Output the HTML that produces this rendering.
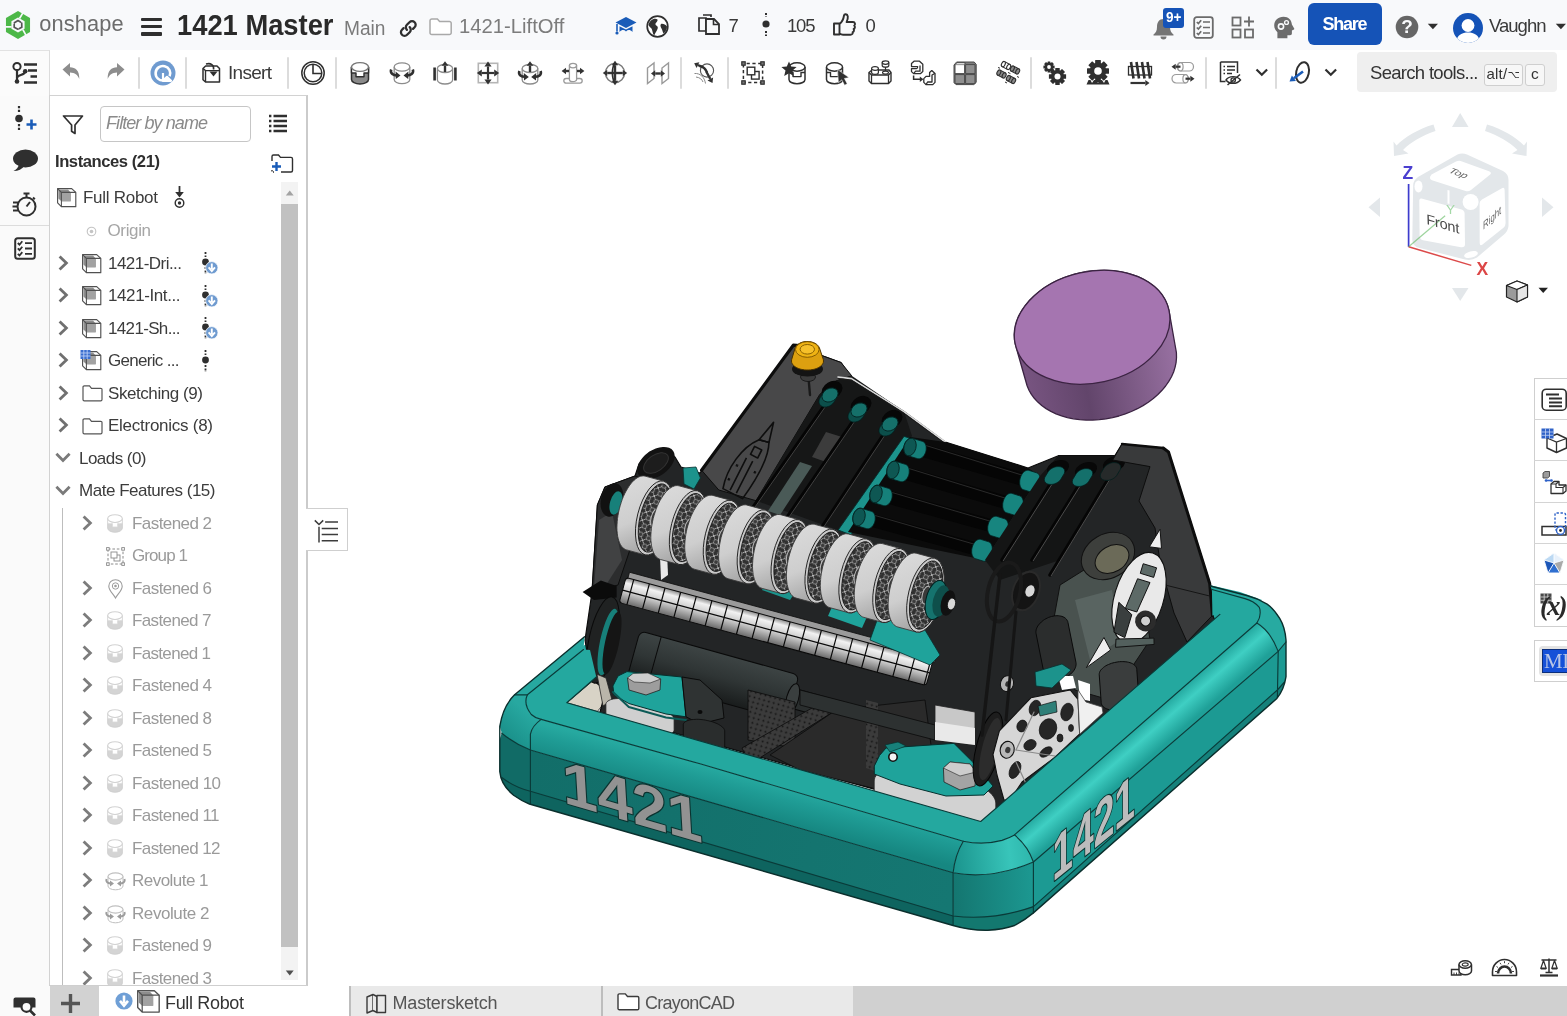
<!DOCTYPE html>
<html lang="en"><head><meta charset="utf-8"><title>1421 Master | Full Robot</title>
<style>
html,body{margin:0;padding:0;}
body{width:1567px;height:1016px;overflow:hidden;background:#fff;position:relative;
font-family:"Liberation Sans",sans-serif;}
.t{position:absolute;white-space:nowrap;}
.b{position:absolute;box-sizing:border-box;}
.i{position:absolute;overflow:visible;}
#app{position:absolute;left:0;top:0;width:1567px;height:1016px;overflow:hidden;will-change:transform;}
</style></head><body><div id="app">
<div class="b" style="left:0.00px;top:0.00px;width:1567.00px;height:50.00px;background:#f8f9fb;"></div>
<div class="b" style="left:0.00px;top:50.00px;width:50.00px;height:966.00px;background:#fafafa;"></div>
<div class="b" style="left:0.00px;top:50.00px;width:50.00px;height:45.50px;background:#fbfbfb;border-right:1px solid #dcdcdc;border-top:1px solid #e2e2e2;"></div>
<div class="b" style="left:0.00px;top:225.00px;width:50.00px;height:1.00px;background:#dcdcdc;"></div>
<div class="b" style="left:49.00px;top:95.00px;width:259.00px;height:891.00px;background:#fff;border:1px solid #d2d2d2;border-right:2px solid #cbcbcb;border-bottom:1px solid #cfcfcf;"></div>
<div class="b" style="left:0.00px;top:986.00px;width:1567.00px;height:30.00px;background:#d0d0d0;"></div>
<div class="b" style="left:0.00px;top:986.00px;width:50.00px;height:30.00px;background:#fafafa;"></div>
<div class="b" style="left:50.00px;top:986.00px;width:49.00px;height:30.00px;background:#d2d2d2;"></div>
<div class="b" style="left:99.00px;top:986.00px;width:250.00px;height:30.00px;background:#fff;"></div>
<div class="b" style="left:349.00px;top:986.00px;width:2.00px;height:30.00px;background:#bdbdbd;"></div>
<div class="b" style="left:351.00px;top:986.00px;width:250.00px;height:30.00px;background:#e9e9e9;"></div>
<div class="b" style="left:601.00px;top:986.00px;width:2.00px;height:30.00px;background:#bdbdbd;"></div>
<div class="b" style="left:603.00px;top:986.00px;width:250.00px;height:30.00px;background:#e9e9e9;"></div>
<svg class="i" style="left:2.90px;top:10.40px;" width="30" height="30" viewBox="0 0 30 30"><g transform="translate(15,15)"><polygon points="0.00,-13.90 12.04,-6.95 12.04,6.95 0.00,13.90 -12.04,6.95 -12.04,-6.95" fill="#4db848"/><polygon points="0.00,-7.60 6.58,-3.80 6.58,3.80 0.00,7.60 -6.58,3.80 -6.58,-3.80" fill="#f8f9fb"/>
<path d="M1.50 -6.50 L5.20 -12.60 M4.88 4.55 L8.31 10.80 M-6.38 1.95 L-13.51 1.80" stroke="#f8f9fb" stroke-width="1.7" fill="none"/>
<path d="M-3.60 -2.20 L0.00 -4.40 M0.00 -4.40 L2.40 -3.00 M3.71 -2.02 L3.81 2.20 M3.81 2.20 L1.40 3.58 M-0.11 4.22 L-3.81 2.20 M-3.81 2.20 L-3.80 -0.58" stroke="#555" stroke-width="1.7" fill="none" stroke-linecap="round" stroke-linejoin="round"/></g></svg>
<div class="t" style="left:39.20px;top:10.62px;font-size:21.80px;line-height:26.16px;color:#6c6c6c;letter-spacing:0.142px;">onshape</div>
<div class="b" style="left:141.00px;top:17.50px;width:21.00px;height:3.60px;background:#2f2f2f;border-radius:1px;"></div>
<div class="b" style="left:141.00px;top:24.80px;width:21.00px;height:3.60px;background:#2f2f2f;border-radius:1px;"></div>
<div class="b" style="left:141.00px;top:32.10px;width:21.00px;height:3.60px;background:#2f2f2f;border-radius:1px;"></div>
<div class="t" style="left:176.80px;top:7.70px;font-size:29.00px;line-height:34.80px;color:#2a2a2a;transform:scaleX(0.9424);transform-origin:0 50%;font-weight:700;">1421 Master</div>
<div class="t" style="left:344.30px;top:16.20px;font-size:20.00px;line-height:24.00px;color:#7a7a7a;transform:scaleX(0.9573);transform-origin:0 50%;">Main</div>
<svg class="i" style="left:398.00px;top:17.00px;" width="20" height="20" viewBox="0 0 20 20"><g fill="none" stroke="#2f2f2f" stroke-width="2.3" stroke-linecap="round">
<path d="M8.6 11.4 a3.6 3.6 0 0 1 0 -5.1 l2.6 -2.6 a3.6 3.6 0 0 1 5.1 5.1 l-1.6 1.6" transform="translate(0.3,1.5)"/>
<path d="M11.4 8.6 a3.6 3.6 0 0 1 0 5.1 l-2.6 2.6 a3.6 3.6 0 0 1 -5.1 -5.1 l1.6 -1.6" transform="translate(0.3,1.5)"/></g></svg>
<svg class="i" style="left:429.00px;top:17.60px;" width="24" height="19" viewBox="0 0 24 19"><path d="M1 2.8 a1.8 1.8 0 0 1 1.8 -1.8 h5.6 l2.2 2.4 h9.8 a1.8 1.8 0 0 1 1.8 1.8 v9.6 a1.8 1.8 0 0 1 -1.8 1.8 h-17.6 a1.8 1.8 0 0 1 -1.8 -1.8 z" fill="#fff" stroke="#a9a9a9" stroke-width="1.5"/></svg>
<div class="t" style="left:458.70px;top:13.88px;font-size:20.20px;line-height:24.24px;color:#7c7c7c;transform:scaleX(1.0030);transform-origin:0 50%;">1421-LiftOff</div>
<svg class="i" style="left:615.00px;top:15.50px;" width="22" height="20" viewBox="0 0 22 20"><path d="M11 1 L21.5 6.5 L11 12 L0.5 6.5 Z" fill="#1a5cb8"/>
<path d="M4.5 10.2 V16 C7 13.5 9 13.5 11 15.5 C13 13.5 15 13.5 17.5 16 V10.2 L11 13.6 Z" fill="#1a5cb8"/>
<path d="M2 8 V15.5" stroke="#1a5cb8" stroke-width="1.6"/><circle cx="2" cy="17" r="1.6" fill="#1a5cb8"/></svg>
<svg class="i" style="left:646.00px;top:15.00px;" width="23" height="23" viewBox="0 0 23 23"><circle cx="11.5" cy="11.5" r="10.3" fill="#fff" stroke="#2f2f2f" stroke-width="1.7"/>
<path d="M5 5.5 C7 3.5 10 3 11.5 4.5 C12 6 10.5 7 9.5 8.5 C9 10 10.5 10.5 11.5 11.5 C12.5 13 11 15 10 17 C9 18.5 8.5 20 8 20.5 C6.5 18 6.5 15.5 5.5 13.5 C4 12 2.5 11 2.5 9.5 C3 7.5 4 6.5 5 5.5 Z" fill="#2f2f2f"/>
<path d="M15 9 C17 8.5 19.5 9.5 21 11.5 C21 14.5 19.5 17 17.5 18.5 C16.5 17 16.5 15 15.5 13.5 C14.5 12 14 10 15 9 Z" fill="#2f2f2f"/></svg>
<svg class="i" style="left:698.00px;top:14.00px;" width="22" height="21" viewBox="0 0 22 21"><path d="M1 4 H8 V17 H1 Z" fill="#f8f9fb" stroke="#2f2f2f" stroke-width="1.7"/>
<path d="M5 1 H13 V3" fill="none" stroke="#2f2f2f" stroke-width="1.7"/>
<path d="M8 5 H16 L21 10 V20 H8 Z" fill="#f8f9fb" stroke="#2f2f2f" stroke-width="1.8"/>
<path d="M15.5 5 V10.5 H21" fill="none" stroke="#2f2f2f" stroke-width="1.6"/></svg>
<div class="t" style="left:728.50px;top:15.40px;font-size:18.50px;line-height:22.20px;color:#3a3a3a;letter-spacing:0.000px;">7</div>
<svg class="i" style="left:760.00px;top:12.00px;" width="12" height="25" viewBox="0 0 12 25"><path d="M6 1 V5 M6 19 V24" stroke="#2f2f2f" stroke-width="2" stroke-dasharray="2 1.4"/><circle cx="6" cy="12" r="3.6" fill="#2f2f2f"/></svg>
<div class="t" style="left:787.00px;top:15.40px;font-size:18.50px;line-height:22.20px;color:#3a3a3a;letter-spacing:-1.184px;">105</div>
<svg class="i" style="left:832.00px;top:12.00px;" width="25" height="25" viewBox="0 0 25 25"><path d="M2 11.5 H7.5 V22.5 H2 Z M7.5 12 C10 10 11.5 7 12 3.5 C12.3 1.8 15.3 1.6 15.8 4.4 C16.1 6.3 15.3 8.3 14.6 10 H21 C23.2 10 23.6 12.8 22.2 13.6 C23.4 14.6 23 16.6 21.6 17 C22.4 18.2 21.9 19.8 20.6 20.2 C21 21.6 20.2 22.8 18.4 22.8 H11 C9.5 22.8 8.5 22.2 7.5 21.5" fill="#f8f9fb" stroke="#2f2f2f" stroke-width="1.9" stroke-linejoin="round"/></svg>
<div class="t" style="left:865.50px;top:15.40px;font-size:18.50px;line-height:22.20px;color:#3a3a3a;letter-spacing:0.000px;">0</div>
<svg class="i" style="left:1152.00px;top:18.00px;" width="23" height="22" viewBox="0 0 23 22"><path d="M11.5 1 C7 1 5 4.5 5 9 C5 13 3.5 15 1.5 16.5 V17.5 H21.5 V16.5 C19.5 15 18 13 18 9 C18 4.5 16 1 11.5 1 Z" fill="#747474"/><path d="M8.5 18.5 a3 3 0 0 0 6 0 Z" fill="#747474"/></svg>
<div class="b" style="left:1163.00px;top:8.00px;width:20.50px;height:19.50px;background:#1553b7;border-radius:3px;"></div>
<div class="t" style="left:1165.60px;top:9.20px;font-size:14.00px;line-height:16.80px;color:#fff;transform:scaleX(0.9710);transform-origin:0 50%;font-weight:700;">9+</div>
<svg class="i" style="left:1193.00px;top:16.00px;" width="21" height="23" viewBox="0 0 21 23"><rect x="1.2" y="1.2" width="18.6" height="20.6" rx="2.5" fill="#f8f9fb" stroke="#6b6b6b" stroke-width="1.8"/>
<g stroke="#6b6b6b" stroke-width="1.7" fill="none"><path d="M10 6 H17 M10 11.5 H17 M10 17 H17"/><path d="M3.8 6 l1.6 1.6 l2.8 -3.4 M3.8 11.5 l1.6 1.6 l2.8 -3.4 M3.8 17 l1.6 1.6 l2.8 -3.4"/></g></svg>
<svg class="i" style="left:1231.00px;top:16.00px;" width="25" height="23" viewBox="0 0 25 23"><g fill="none" stroke="#6b6b6b" stroke-width="1.8"><rect x="1.5" y="1.5" width="8" height="8"/><rect x="1.5" y="13.5" width="8" height="8"/><rect x="14" y="13.5" width="8" height="8"/><path d="M18 0.5 V10.5 M13 5.5 H23"/></g></svg>
<svg class="i" style="left:1273.00px;top:16.00px;" width="22" height="23" viewBox="0 0 22 23"><path d="M10.5 0.8 C5 0.8 1.2 4.6 1.2 9.6 C1.2 12.6 2.6 14.6 4.4 16.2 V22.2 H14.4 V19.2 H17 C18.3 19.2 18.9 18.4 18.9 17.2 V14.4 L21 13.6 C21.4 13.4 21.4 12.9 21.2 12.5 L18.9 8.6 C18.6 4 15.5 0.8 10.5 0.8 Z" fill="#6c6c6c"/>
<circle cx="8" cy="10.5" r="2.6" fill="none" stroke="#f8f9fb" stroke-width="1.6"/><circle cx="13.5" cy="6.5" r="1.9" fill="none" stroke="#f8f9fb" stroke-width="1.4"/></svg>
<div class="b" style="left:1308.00px;top:3.00px;width:74.00px;height:41.50px;background:#1553b7;border-radius:6px;"></div>
<div class="t" style="left:1322.50px;top:13.50px;font-size:18.00px;line-height:21.60px;color:#fff;letter-spacing:-1.257px;font-weight:700;">Share</div>
<svg class="i" style="left:1394.50px;top:15.00px;" width="24" height="24" viewBox="0 0 24 24"><circle cx="12" cy="12" r="11.3" fill="#666"/></svg>
<div class="t" style="left:1401.20px;top:15.90px;font-size:19.00px;line-height:22.80px;color:#f8f9fb;font-weight:700;">?</div>
<svg class="i" style="left:1427.00px;top:23.00px;" width="12" height="7" viewBox="0 0 12 7"><path d="M0.8 0.8 H11 L5.9 6.2 Z" fill="#2f2f2f"/></svg>
<svg class="i" style="left:1453.00px;top:12.50px;" width="30" height="28" viewBox="0 0 30 28"><defs><clipPath id="avc"><circle cx="15" cy="15" r="15"/></clipPath></defs>
<g clip-path="url(#avc)"><rect width="30" height="30" fill="#1553b7"/><circle cx="15" cy="12.5" r="6.4" fill="#fff"/><path d="M3 31 C3 22 9 19.5 15 19.5 C21 19.5 27 22 27 31 Z" fill="#fff"/></g></svg>
<div class="t" style="left:1489.00px;top:15.10px;font-size:18.50px;line-height:22.20px;color:#3a3a3a;letter-spacing:-0.983px;">Vaughn</div>
<svg class="i" style="left:1555.00px;top:23.00px;" width="12" height="7" viewBox="0 0 12 7"><path d="M0.8 0.8 H11 L5.9 6.2 Z" fill="#2f2f2f"/></svg>
<svg class="i" style="left:11.00px;top:61.00px;" width="28" height="24" viewBox="0 0 28 24"><g stroke="#2f2f2f" fill="none" stroke-width="2.6"><path d="M13 3.5 H26 M17 9.5 H26 M19.5 15.5 H26 M13 21.5 H26"/></g>
<circle cx="6" cy="5.5" r="3.6" fill="#fff" stroke="#2f2f2f" stroke-width="2"/>
<path d="M6 9 V20" stroke="#2f2f2f" stroke-width="2.2"/><path d="M6 17 C6 13 14 15 14 10.5" stroke="#2f2f2f" stroke-width="2.2" fill="none"/>
<circle cx="6" cy="20.5" r="2.3" fill="#2f2f2f"/><circle cx="14.2" cy="10.2" r="2.3" fill="#2f2f2f"/></svg>
<svg class="i" style="left:58.00px;top:59.00px;" width="26" height="26" viewBox="0 0 26 26"><path d="M4.5 10.5 L12 4 V8.3 C17.5 8.3 21.5 11.5 21.3 20 C19.6 15.5 17 13.6 12 13.4 V17.6 Z" fill="#8d8d8d"/></svg>
<svg class="i" style="left:103.00px;top:59.00px;" width="26" height="26" viewBox="0 0 26 26"><path d="M21.5 10.5 L14 4 V8.3 C8.5 8.3 4.5 11.5 4.7 20 C6.4 15.5 9 13.6 14 13.4 V17.6 Z" fill="#8d8d8d"/></svg>
<div class="b" style="left:137.80px;top:56.50px;width:2.40px;height:32.00px;background:#dcdcdc;border-radius:1px;"></div>
<svg class="i" style="left:149.50px;top:59.50px;" width="26" height="26" viewBox="0 0 26 26"><circle cx="13" cy="13" r="12.5" fill="#6f9bd0"/>
<path d="M13.8 20.5 A7.3 7.3 0 1 1 19.6 16.2" fill="none" stroke="#fff" stroke-width="2.6"/>
<path d="M13.2 12 V18.5 H10.5 L14.8 23.5 L21.5 20 L17.5 18.6 V12 Z" fill="#fff" opacity="0.0"/>
<path d="M13 13 V20.8 M13 20.8 H21 L17 16.8 Z" stroke="#fff" stroke-width="2.2" fill="#fff" stroke-linejoin="round"/></svg>
<div class="b" style="left:185.10px;top:56.50px;width:2.40px;height:32.00px;background:#dcdcdc;border-radius:1px;"></div>
<svg class="i" style="left:197.50px;top:59.50px;" width="26" height="26" viewBox="0 0 26 26"><path d="M5 8.5 L7.6 6 H19 L21.5 8.5 V22 H7.5 L5 19.8 Z" fill="#fff" stroke="#2f2f2f" stroke-width="1.5" stroke-linejoin="round"/>
<path d="M5 8.5 L7.5 10.6 H21.5 M7.5 10.6 V22" fill="none" stroke="#2f2f2f" stroke-width="1.4"/>
<path d="M8 4 C13 2.6 16 5 15.6 9.5" fill="none" stroke="#2f2f2f" stroke-width="1.6"/>
<path d="M11.5 11.5 H19.5 L15.5 16.5 Z" fill="#2f2f2f"/></svg>
<div class="t" style="left:228.00px;top:61.60px;font-size:19.00px;line-height:22.80px;color:#3a3a3a;letter-spacing:-0.704px;">Insert</div>
<div class="b" style="left:286.80px;top:56.50px;width:2.40px;height:32.00px;background:#dcdcdc;border-radius:1px;"></div>
<svg class="i" style="left:299.50px;top:59.50px;" width="26" height="26" viewBox="0 0 26 26"><circle cx="13" cy="13" r="11.2" fill="#fff" stroke="#2f2f2f" stroke-width="1.5"/><circle cx="13" cy="13" r="8.8" fill="#fff" stroke="#2f2f2f" stroke-width="1.5"/><path d="M13 4.5 V13.5 H21.5" fill="none" stroke="#2f2f2f" stroke-width="1.6"/></svg>
<div class="b" style="left:334.50px;top:56.50px;width:2.40px;height:32.00px;background:#dcdcdc;border-radius:1px;"></div>
<svg class="i" style="left:346.50px;top:59.50px;" width="26" height="26" viewBox="0 0 26 26"><path d="M4.5 7 V19.5 A8.5 4.4 0 0 0 21.5 19.5 V7" fill="#8a8a8a" stroke="#2f2f2f" stroke-width="1.5"/>
<path d="M4.5 7 V13 H9 V16.8 H17 V13 H21.5 V7 Z" fill="#fff" stroke="#2f2f2f" stroke-width="1.4" stroke-linejoin="round"/>
<ellipse cx="13" cy="7" rx="8.5" ry="4.4" fill="#fff" stroke="#777" stroke-width="1.4"/></svg>
<svg class="i" style="left:389.00px;top:59.50px;" width="26" height="26" viewBox="0 0 26 26"><path d="M5.20 7.00 V19.50 A7.80 4.20 0 0 0 20.80 19.50 V7.00" fill="#fff" stroke="#8c8c8c" stroke-width="1.30"/><ellipse cx="13.00" cy="7.00" rx="7.80" ry="4.20" fill="#fff" stroke="#8c8c8c" stroke-width="1.30"/><path d="M2.2 9.5 C0.8 13.5 4.5 15.8 8.5 15.5" fill="none" stroke="#2f2f2f" stroke-width="2.6"/><path d="M11.5 15.6 L6.6 11.6 L6.8 19 Z" fill="#2f2f2f"/>
<path d="M23.8 9.5 C25.2 13.5 21.5 15.8 17.5 15.5" fill="none" stroke="#2f2f2f" stroke-width="2.6"/><path d="M14.5 15.6 L19.4 11.6 L19.2 19 Z" fill="#2f2f2f"/></svg>
<svg class="i" style="left:431.50px;top:59.50px;" width="26" height="26" viewBox="0 0 26 26"><path d="M5.40 8.50 V20.00 A7.60 4.00 0 0 0 20.60 20.00 V8.50" fill="#fff" stroke="#8c8c8c" stroke-width="1.30"/><ellipse cx="13.00" cy="8.50" rx="7.60" ry="4.00" fill="#fff" stroke="#8c8c8c" stroke-width="1.30"/><path d="M13.00 12.00 L13.00 5.80" stroke="#333" stroke-width="2.40" fill="none"/><path d="M13.00 1.20 L16.40 5.80 L9.60 5.80 Z" fill="#333"/><path d="M2.6 7.5 V20.5 M23.4 7.5 V20.5" stroke="#2f2f2f" stroke-width="2.6"/></svg>
<svg class="i" style="left:474.50px;top:59.50px;" width="26" height="26" viewBox="0 0 26 26"><rect x="3.3" y="3.3" width="19.4" height="19.4" fill="#fff" stroke="#b5b5b5" stroke-width="1.6"/><path d="M13.00 13.00 L13.00 6.50" stroke="#333" stroke-width="2.20" fill="none"/><path d="M13.00 1.50 L16.60 6.50 L9.40 6.50 Z" fill="#333"/><path d="M13.00 13.00 L13.00 19.50" stroke="#333" stroke-width="2.20" fill="none"/><path d="M13.00 24.50 L9.40 19.50 L16.60 19.50 Z" fill="#333"/><path d="M13.00 13.00 L6.80 13.00" stroke="#333" stroke-width="2.20" fill="none"/><path d="M1.80 13.00 L6.80 9.40 L6.80 16.60 Z" fill="#333"/><path d="M13.00 13.00 L19.20 13.00" stroke="#333" stroke-width="2.20" fill="none"/><path d="M24.20 13.00 L19.20 16.60 L19.20 9.40 Z" fill="#333"/></svg>
<svg class="i" style="left:516.50px;top:59.50px;" width="26" height="26" viewBox="0 0 26 26"><path d="M5.20 8.50 V20.00 A7.80 4.00 0 0 0 20.80 20.00 V8.50" fill="#fff" stroke="#8c8c8c" stroke-width="1.30"/><ellipse cx="13.00" cy="8.50" rx="7.80" ry="4.00" fill="#fff" stroke="#8c8c8c" stroke-width="1.30"/><path d="M13.00 12.00 L13.00 5.80" stroke="#333" stroke-width="2.40" fill="none"/><path d="M13.00 1.20 L16.40 5.80 L9.60 5.80 Z" fill="#333"/><path d="M2.4 11 C1 14.8 4.5 17 8.5 16.8" fill="none" stroke="#2f2f2f" stroke-width="2.6"/><path d="M11.8 17 L6.8 13 L7 20.4 Z" fill="#2f2f2f"/>
<path d="M23.6 11 C25 14.8 21.5 17 17.5 16.8" fill="none" stroke="#2f2f2f" stroke-width="2.6"/><path d="M14.2 17 L19.2 13 L19 20.4 Z" fill="#2f2f2f"/></svg>
<svg class="i" style="left:559.50px;top:59.50px;" width="26" height="26" viewBox="0 0 26 26"><rect x="3.8" y="18.5" width="18.4" height="4.6" rx="2.3" fill="#fff" stroke="#9a9a9a" stroke-width="1.3"/><path d="M9.40 5.60 V19.50 A3.60 2.20 0 0 0 16.60 19.50 V5.60" fill="#fff" stroke="#9a9a9a" stroke-width="1.30"/><ellipse cx="13.00" cy="5.60" rx="3.60" ry="2.20" fill="#fff" stroke="#9a9a9a" stroke-width="1.30"/><path d="M9.00 11.00 L6.00 11.00" stroke="#333" stroke-width="2.40" fill="none"/><path d="M1.60 11.00 L6.00 7.70 L6.00 14.30 Z" fill="#333"/><path d="M17.00 11.00 L20.00 11.00" stroke="#333" stroke-width="2.40" fill="none"/><path d="M24.40 11.00 L20.00 14.30 L20.00 7.70 Z" fill="#333"/></svg>
<svg class="i" style="left:601.50px;top:59.50px;" width="26" height="26" viewBox="0 0 26 26"><circle cx="13" cy="13" r="9.6" fill="#fff" stroke="#777" stroke-width="1.4"/><path d="M13.00 13.00 L13.00 5.20" stroke="#333" stroke-width="2.40" fill="none"/><path d="M13.00 0.80 L16.30 5.20 L9.70 5.20 Z" fill="#333"/><path d="M13.00 13.00 L13.00 20.80" stroke="#333" stroke-width="2.40" fill="none"/><path d="M13.00 25.20 L9.70 20.80 L16.30 20.80 Z" fill="#333"/><path d="M13.00 13.00 L5.20 13.00" stroke="#333" stroke-width="2.40" fill="none"/><path d="M0.80 13.00 L5.20 9.70 L5.20 16.30 Z" fill="#333"/><path d="M13.00 13.00 L20.80 13.00" stroke="#333" stroke-width="2.40" fill="none"/><path d="M25.20 13.00 L20.80 16.30 L20.80 9.70 Z" fill="#333"/><path d="M13 3 C9.5 8 9.5 18 13 23" fill="none" stroke="#2f2f2f" stroke-width="1.6"/></svg>
<svg class="i" style="left:644.50px;top:59.50px;" width="26" height="26" viewBox="0 0 26 26"><path d="M2.5 8 L9 3 V18.5 L2.5 23.5 Z M17 8 L23.5 3 V18.5 L17 23.5 Z" fill="#fff" stroke="#9a9a9a" stroke-width="1.4"/><path d="M13.00 13.50 L10.20 13.50" stroke="#333" stroke-width="2.40" fill="none"/><path d="M6.00 13.50 L10.20 10.30 L10.20 16.70 Z" fill="#333"/><path d="M13.00 13.50 L15.80 13.50" stroke="#333" stroke-width="2.40" fill="none"/><path d="M20.00 13.50 L15.80 16.70 L15.80 10.30 Z" fill="#333"/></svg>
<div class="b" style="left:679.50px;top:56.50px;width:2.40px;height:32.00px;background:#dcdcdc;border-radius:1px;"></div>
<svg class="i" style="left:691.50px;top:59.50px;" width="26" height="26" viewBox="0 0 26 26"><circle cx="15" cy="10.5" r="6.6" fill="none" stroke="#555" stroke-width="1.1"/><path d="M2.5 13.5 C8 13 12.5 17 13.5 23.5 M4 17 C8 17.5 10 19.5 11 22" fill="none" stroke="#888" stroke-width="1"/><path d="M9.00 6.50 L5.98 5.03" stroke="#333" stroke-width="2.40" fill="none"/><path d="M2.20 3.20 L7.38 2.15 L4.58 7.91 Z" fill="#333"/><path d="M14.50 12.00 L18.30 18.96" stroke="#333" stroke-width="2.40" fill="none"/><path d="M20.50 23.00 L15.49 20.49 L21.11 17.43 Z" fill="#333"/><path d="M8 6 C11.5 7 14 9.5 15 12.5" stroke="#2f2f2f" stroke-width="2.4" fill="none"/></svg>
<div class="b" style="left:726.80px;top:56.50px;width:2.40px;height:32.00px;background:#dcdcdc;border-radius:1px;"></div>
<svg class="i" style="left:739.50px;top:59.50px;" width="26" height="26" viewBox="0 0 26 26"><rect x="3.4" y="3.4" width="19.2" height="19.2" fill="none" stroke="#2f2f2f" stroke-width="1.5" stroke-dasharray="3.2 2.6" stroke-dashoffset="-3.2"/>
<g fill="#777" stroke="#2f2f2f" stroke-width="1.2"><rect x="1.8" y="1.8" width="3.4" height="3.4"/><rect x="20.8" y="1.8" width="3.4" height="3.4"/><rect x="1.8" y="20.8" width="3.4" height="3.4"/><rect x="20.8" y="20.8" width="3.4" height="3.4"/></g>
<rect x="11.5" y="11.5" width="7.6" height="7.6" fill="#fff" stroke="#2f2f2f" stroke-width="1.4"/><rect x="7.2" y="7.2" width="7.6" height="7.6" fill="#fff" stroke="#2f2f2f" stroke-width="1.4"/></svg>
<svg class="i" style="left:782.00px;top:59.50px;" width="26" height="26" viewBox="0 0 26 26"><path d="M7 7 V19.5 A8 4.2 0 0 0 23 19.5 V7" fill="#fff" stroke="#2f2f2f" stroke-width="1.5"/>
<path d="M7 12.5 H11 V16.6 H19 V12.5 H23" fill="none" stroke="#2f2f2f" stroke-width="1.4" stroke-linejoin="round"/>
<ellipse cx="15" cy="7" rx="8" ry="4.2" fill="#fff" stroke="#2f2f2f" stroke-width="1.4"/><path d="M7 1.5 L9.2 6.6 L14.6 7 L10.5 10.6 L11.8 16 L7 13.2 L2.2 16 L3.5 10.6 L-0.6 7 L4.8 6.6 Z" fill="#2f2f2f"/></svg>
<svg class="i" style="left:824.00px;top:59.50px;" width="26" height="26" viewBox="0 0 26 26"><path d="M2.5 7 V19.5 A8 4.2 0 0 0 18.5 19.5 V7" fill="#fff" stroke="#2f2f2f" stroke-width="1.5"/>
<path d="M2.5 12.5 H6.5 V16.6 H14.5 V12.5 H18.5" fill="none" stroke="#2f2f2f" stroke-width="1.4" stroke-linejoin="round"/>
<ellipse cx="10.5" cy="7" rx="8" ry="4.2" fill="#fff" stroke="#2f2f2f" stroke-width="1.4"/><path d="M13.6 9.5 L25 17.6 L20.4 18.4 L23.2 23.8 L20.6 25.2 L17.8 19.8 L14.4 22.8 Z" fill="#2f2f2f" stroke="#fff" stroke-width="0.5"/></svg>
<svg class="i" style="left:866.50px;top:59.50px;" width="26" height="26" viewBox="0 0 26 26"><path d="M2 12.5 L5 10 H22 L24 12.5 V21 L21.5 23.5 H4.5 L2 21 Z" fill="#fff" stroke="#2f2f2f" stroke-width="1.4" stroke-linejoin="round"/><path d="M2 12.5 L4.5 15 H21.5 L24 12.5 M4.5 15 V23.5 M21.5 15 V23.5" fill="none" stroke="#2f2f2f" stroke-width="1.3"/><path d="M4.60 8.50 V12.40 A3.40 1.90 0 0 0 11.40 12.40 V8.50" fill="#fff" stroke="#2f2f2f" stroke-width="1.20"/><ellipse cx="8.00" cy="8.50" rx="3.40" ry="1.90" fill="#fff" stroke="#2f2f2f" stroke-width="1.20"/><path d="M18.5 5 V12" stroke="#2f2f2f" stroke-width="1.2"/><ellipse cx="18.5" cy="12.6" rx="3" ry="1.5" fill="#fff" stroke="#2f2f2f" stroke-width="1.1"/><path d="M15.20 2.60 V5.40 A3.30 1.70 0 0 0 21.80 5.40 V2.60" fill="#fff" stroke="#2f2f2f" stroke-width="1.20"/><ellipse cx="18.50" cy="2.60" rx="3.30" ry="1.70" fill="#fff" stroke="#2f2f2f" stroke-width="1.20"/></svg>
<svg class="i" style="left:909.50px;top:59.50px;" width="26" height="26" viewBox="0 0 26 26"><g fill="#fff" stroke="#2f2f2f" stroke-width="1.3" stroke-linejoin="round"><path d="M1.5 3.5 L4 1.2 H9.5 L12.8 4.2 V11.6 L10.6 13.6 H3.6 L1.5 11.6 V8.6 H7.6 V6.6 H1.5 Z"/><path d="M3.6 13.6 L5.6 11.2 H10 V5.6"/>
<path d="M13.8 18.6 L16 16.4 H19.6 V12.6 L21.8 10.6 L25 13.4 V22.4 L22.8 24.6 H16 L13.8 22.4 Z"/><path d="M16 24.6 L17.6 22 H22 V15 L25 13.4"/></g>
<path d="M3.6 15.5 V19.2 H10.6" fill="none" stroke="#2f2f2f" stroke-width="1.5"/><path d="M13.4 19.2 L9.8 16.4 V22 Z" fill="#2f2f2f"/></svg>
<svg class="i" style="left:951.50px;top:59.50px;" width="26" height="26" viewBox="0 0 26 26"><g stroke="#4a4a4a" stroke-width="1" stroke-linejoin="round"><path d="M2 5 L4.6 2 H22.2 L24.2 4.4 V22.4 L21.8 24.6 H4 L2 22.6 Z" fill="#7d7d7d"/>
<rect x="3" y="4.6" width="9.6" height="9" fill="#fff"/><rect x="13.6" y="4.6" width="9.4" height="9" fill="#8f8f8f"/><rect x="3" y="14.6" width="9.6" height="9" fill="#8f8f8f"/><rect x="13.6" y="14.6" width="9.4" height="9" fill="#8f8f8f"/><path d="M3 4.6 L5 2.6 H13.4 L12.6 4.6" fill="#e6e6e6"/></g></svg>
<svg class="i" style="left:994.50px;top:59.50px;" width="26" height="26" viewBox="0 0 26 26"><g transform="rotate(28 11 5.5)"><rect x="8" y="2.7" width="6" height="5.6" fill="#fff" stroke="#2f2f2f" stroke-width="1.1"/><ellipse cx="8" cy="5.5" rx="1.7" ry="2.8" fill="#fff" stroke="#2f2f2f" stroke-width="1.1"/><ellipse cx="14" cy="5.5" rx="1.7" ry="2.8" fill="#fff" stroke="#2f2f2f" stroke-width="1.1"/></g><g transform="rotate(28 20 10)"><rect x="17" y="7.2" width="6" height="5.6" fill="#8a8a8a" stroke="#2f2f2f" stroke-width="1.1"/><ellipse cx="17" cy="10" rx="1.7" ry="2.8" fill="#8a8a8a" stroke="#2f2f2f" stroke-width="1.1"/><ellipse cx="23" cy="10" rx="1.7" ry="2.8" fill="#8a8a8a" stroke="#2f2f2f" stroke-width="1.1"/></g><g transform="rotate(28 6.5 14)"><rect x="3.5" y="11.2" width="6" height="5.6" fill="#8a8a8a" stroke="#2f2f2f" stroke-width="1.1"/><ellipse cx="3.5" cy="14" rx="1.7" ry="2.8" fill="#8a8a8a" stroke="#2f2f2f" stroke-width="1.1"/><ellipse cx="9.5" cy="14" rx="1.7" ry="2.8" fill="#8a8a8a" stroke="#2f2f2f" stroke-width="1.1"/></g><g transform="rotate(28 16 19.5)"><rect x="13" y="16.7" width="6" height="5.6" fill="#8a8a8a" stroke="#2f2f2f" stroke-width="1.1"/><ellipse cx="13" cy="19.5" rx="1.7" ry="2.8" fill="#8a8a8a" stroke="#2f2f2f" stroke-width="1.1"/><ellipse cx="19" cy="19.5" rx="1.7" ry="2.8" fill="#8a8a8a" stroke="#2f2f2f" stroke-width="1.1"/></g><path d="M3 7.5 L5 8.2 M13 12.4 L15.4 13.6 M22 16.5 L24 17.4 M10 22 L12 23" stroke="#2f2f2f" stroke-width="1"/></svg>
<div class="b" style="left:1029.80px;top:56.50px;width:2.40px;height:32.00px;background:#dcdcdc;border-radius:1px;"></div>
<svg class="i" style="left:1041.00px;top:59.50px;" width="26" height="26" viewBox="0 0 26 26"><rect x="6.54" y="1.40" width="2.91" height="11.20" rx="0.5" fill="#2f2f2f" transform="rotate(0.0 8.00 7.00)"/><rect x="6.54" y="1.40" width="2.91" height="11.20" rx="0.5" fill="#2f2f2f" transform="rotate(45.0 8.00 7.00)"/><rect x="6.54" y="1.40" width="2.91" height="11.20" rx="0.5" fill="#2f2f2f" transform="rotate(90.0 8.00 7.00)"/><rect x="6.54" y="1.40" width="2.91" height="11.20" rx="0.5" fill="#2f2f2f" transform="rotate(135.0 8.00 7.00)"/><circle cx="8.00" cy="7.00" r="4.20" fill="#2f2f2f"/><circle cx="8.00" cy="7.00" r="1.90" fill="#fff"/><rect x="14.26" y="7.90" width="4.47" height="17.20" rx="0.5" fill="#2f2f2f" transform="rotate(0.0 16.50 16.50)"/><rect x="14.26" y="7.90" width="4.47" height="17.20" rx="0.5" fill="#2f2f2f" transform="rotate(45.0 16.50 16.50)"/><rect x="14.26" y="7.90" width="4.47" height="17.20" rx="0.5" fill="#2f2f2f" transform="rotate(90.0 16.50 16.50)"/><rect x="14.26" y="7.90" width="4.47" height="17.20" rx="0.5" fill="#2f2f2f" transform="rotate(135.0 16.50 16.50)"/><circle cx="16.50" cy="16.50" r="6.50" fill="#2f2f2f"/><circle cx="16.50" cy="16.50" r="3.00" fill="#fff"/></svg>
<svg class="i" style="left:1084.50px;top:59.50px;" width="26" height="26" viewBox="0 0 26 26"><rect x="10.14" y="0.00" width="5.72" height="22.00" rx="0.5" fill="#2f2f2f" transform="rotate(0.0 13.00 11.00)"/><rect x="10.14" y="0.00" width="5.72" height="22.00" rx="0.5" fill="#2f2f2f" transform="rotate(45.0 13.00 11.00)"/><rect x="10.14" y="0.00" width="5.72" height="22.00" rx="0.5" fill="#2f2f2f" transform="rotate(90.0 13.00 11.00)"/><rect x="10.14" y="0.00" width="5.72" height="22.00" rx="0.5" fill="#2f2f2f" transform="rotate(135.0 13.00 11.00)"/><circle cx="13.00" cy="11.00" r="8.20" fill="#2f2f2f"/><circle cx="13.00" cy="11.00" r="3.80" fill="#fff"/><path d="M1.5 24.5 L3.5 20 L5.5 20 L7 23 L9 20 L11.5 20 L13 23 L14.5 20 L17 20 L19 23 L20.5 20 L22.5 20 L24.5 24.5 Z" fill="#2f2f2f"/></svg>
<svg class="i" style="left:1126.50px;top:59.50px;" width="26" height="26" viewBox="0 0 26 26"><rect x="1.5" y="6.5" width="23" height="8.5" fill="#fff" stroke="#2f2f2f" stroke-width="1.3"/>
<g stroke="#2f2f2f" stroke-width="2.6"><path d="M4 2 L6.5 18.5 M9.5 2 L12 18.5 M15 2 L17.5 18.5 M20.5 2 L23 18.5"/></g><path d="M3.50 23.00 L18.30 23.00" stroke="#333" stroke-width="2.20" fill="none"/><path d="M22.50 23.00 L18.30 26.00 L18.30 20.00 Z" fill="#333"/></svg>
<svg class="i" style="left:1169.50px;top:59.50px;" width="26" height="26" viewBox="0 0 26 26"><g fill="#fff" stroke="#9a9a9a" stroke-width="1.2"><rect x="7" y="2.5" width="16.5" height="8.5" rx="4.2"/><ellipse cx="10.5" cy="6.75" rx="2.6" ry="4.2"/><rect x="2" y="14.5" width="16.5" height="8.5" rx="4.2"/><ellipse cx="15.5" cy="18.75" rx="2.6" ry="4.2"/></g><path d="M10.50 6.70 L5.70 6.70" stroke="#333" stroke-width="2.20" fill="none"/><path d="M1.50 6.70 L5.70 3.70 L5.70 9.70 Z" fill="#333"/><path d="M15.50 18.70 L20.30 18.70" stroke="#333" stroke-width="2.20" fill="none"/><path d="M24.50 18.70 L20.30 21.70 L20.30 15.70 Z" fill="#333"/></svg>
<div class="b" style="left:1204.60px;top:56.50px;width:2.40px;height:32.00px;background:#dcdcdc;border-radius:1px;"></div>
<svg class="i" style="left:1217.50px;top:59.50px;" width="26" height="26" viewBox="0 0 26 26"><path d="M2.5 2 H19.5 V13 M2.5 2 V21.5 H7.5" fill="none" stroke="#2f2f2f" stroke-width="1.5"/>
<g stroke="#2f2f2f" stroke-width="1.4"><path d="M5.5 6.5 H7 M9 6.5 H17 M5.5 10 H7 M9 10 H17 M5.5 13.5 H7 M9 13.5 H14"/></g>
<path d="M8 20 C11 15.5 19 15.5 22.5 20 C19 24.5 11 24.5 8 20 Z" fill="#fff" stroke="#2f2f2f" stroke-width="1.4"/><circle cx="15.2" cy="20" r="2.2" fill="none" stroke="#2f2f2f" stroke-width="1.3"/><path d="M9.5 25 L22 14.5" stroke="#2f2f2f" stroke-width="1.5"/></svg>
<svg class="i" style="left:1254.50px;top:67.50px;" width="14" height="9" viewBox="0 0 14 9"><path d="M1.5 1.5 L6.8 6.8 L12.1 1.5" fill="none" stroke="#2f2f2f" stroke-width="2.2"/></svg>
<div class="b" style="left:1274.80px;top:56.50px;width:2.40px;height:32.00px;background:#dcdcdc;border-radius:1px;"></div>
<svg class="i" style="left:1287.00px;top:59.50px;" width="26" height="26" viewBox="0 0 26 26"><ellipse cx="15.5" cy="12.5" rx="6.3" ry="10.4" fill="none" stroke="#2f2f2f" stroke-width="2" transform="rotate(12 15.5 12.5)"/><path d="M16.00 11.50 L6.92 18.23" stroke="#1a5cb8" stroke-width="2.60" fill="none"/><path d="M2.50 21.50 L4.90 15.49 L8.94 20.96 Z" fill="#1a5cb8"/></svg>
<svg class="i" style="left:1324.00px;top:67.50px;" width="14" height="9" viewBox="0 0 14 9"><path d="M1.5 1.5 L6.8 6.8 L12.1 1.5" fill="none" stroke="#2f2f2f" stroke-width="2.2"/></svg>
<div class="b" style="left:1357.00px;top:52.30px;width:200.00px;height:40.20px;background:#efefef;border-radius:4px;"></div>
<div class="t" style="left:1370.00px;top:61.90px;font-size:18.50px;line-height:22.20px;color:#333;letter-spacing:-0.697px;">Search tools...</div>
<div class="b" style="left:1483.50px;top:63.80px;width:39.50px;height:21.80px;background:#f7f7f7;border:1px solid #cfcfcf;border-radius:3px;"></div>
<div class="t" style="left:1486.60px;top:65.40px;font-size:15.00px;line-height:18.00px;color:#333;letter-spacing:0.163px;">alt/</div>
<div class="t" style="left:1507.60px;top:67.90px;font-size:10.50px;line-height:12.60px;color:#333;font-family:'DejaVu Sans','Liberation Sans',sans-serif;">⌥</div>
<div class="b" style="left:1525.00px;top:63.80px;width:19.50px;height:21.80px;background:#f7f7f7;border:1px solid #cfcfcf;border-radius:3px;"></div>
<div class="t" style="left:1531.00px;top:64.90px;font-size:15.50px;line-height:18.60px;color:#333;">c</div>
<svg class="i" style="left:12.00px;top:105.00px;" width="26" height="26" viewBox="0 0 26 26"><path d="M7 1 V8 M7 19 V25" stroke="#2f2f2f" stroke-width="2.2" stroke-dasharray="2.2 1.6"/><circle cx="7" cy="13.5" r="3.8" fill="#2f2f2f"/>
<path d="M19.5 14.5 V24.5 M14.5 19.5 H24.5" stroke="#1a5cb8" stroke-width="2.6"/></svg>
<svg class="i" style="left:12.00px;top:149.00px;" width="27" height="23" viewBox="0 0 27 23"><ellipse cx="13.5" cy="9.5" rx="12.5" ry="9" fill="#2f2f2f"/><path d="M7 15 C6.5 18.5 4.5 20.5 1.5 22 C6.5 22 10 20 12.5 17 Z" fill="#2f2f2f"/></svg>
<svg class="i" style="left:12.00px;top:191.00px;" width="26" height="27" viewBox="0 0 26 27"><circle cx="14.5" cy="15.5" r="9" fill="#fafafa" stroke="#2f2f2f" stroke-width="2"/><path d="M11.5 2.5 H17.5 M14.5 2.5 V6 M21 6.5 L22.8 8.3" stroke="#2f2f2f" stroke-width="2"/><path d="M14.5 15.5 L18 11" stroke="#2f2f2f" stroke-width="2"/><path d="M1 11.5 H6.5 M0.5 15.5 H5 M1 19.5 H6.5" stroke="#2f2f2f" stroke-width="1.8"/></svg>
<svg class="i" style="left:14.00px;top:237.00px;" width="22" height="23" viewBox="0 0 22 23"><rect x="1.2" y="1.2" width="19.6" height="20.6" rx="2.5" fill="#fafafa" stroke="#2f2f2f" stroke-width="2"/>
<g stroke="#2f2f2f" stroke-width="1.8" fill="none"><path d="M11 6.2 H18 M11 11.5 H18 M11 16.8 H18"/><path d="M3.8 6 l1.7 1.7 l2.8 -3.4 M3.8 11.4 l1.7 1.7 l2.8 -3.4 M3.8 16.8 l1.7 1.7 l2.8 -3.4"/></g></svg>
<svg class="i" style="left:13.00px;top:997.00px;" width="24" height="19" viewBox="0 0 24 19"><path d="M0.5 2.5 a2 2 0 0 1 2 -2 h18 a2 2 0 0 1 2 2 V10.5 H0.5 Z" fill="#2f2f2f"/><circle cx="13.5" cy="9.8" r="5" fill="#fafafa" stroke="#2f2f2f" stroke-width="2.2"/><path d="M17 13.5 L22 18.5" stroke="#2f2f2f" stroke-width="2.6"/></svg>
<svg class="i" style="left:62.00px;top:114.00px;" width="22" height="22" viewBox="0 0 22 22"><path d="M1.5 2 H20.5 L13 11 V19.5 L9.6 17.2 V11 Z" fill="#fff" stroke="#2f2f2f" stroke-width="1.7" stroke-linejoin="round"/></svg>
<div class="b" style="left:99.50px;top:105.50px;width:151.00px;height:36.00px;background:#fff;border:1.5px solid #c6c6c6;border-radius:4px;"></div>
<div class="t" style="left:106.00px;top:113.20px;font-size:18.00px;line-height:21.60px;color:#8a8a8a;letter-spacing:-0.926px;font-style:italic;">Filter by name</div>
<svg class="i" style="left:268.00px;top:113.00px;" width="20" height="20" viewBox="0 0 20 20"><g stroke="#2f2f2f" stroke-width="2.5"><path d="M5.5 3 H19 M5.5 8 H19 M5.5 13 H19 M5.5 18 H19"/><path d="M1 3 H3.4 M1 8 H3.4 M1 13 H3.4 M1 18 H3.4"/></g></svg>
<div class="t" style="left:55.00px;top:151.54px;font-size:16.60px;line-height:19.92px;color:#2f2f2f;letter-spacing:-0.440px;font-weight:700;">Instances (21)</div>
<svg class="i" style="left:269.00px;top:153.00px;" width="25" height="20" viewBox="0 0 25 20"><path d="M3 8 V3.5 a1.5 1.5 0 0 1 1.5 -1.5 h5 l2 2.4 h10.5 a1.5 1.5 0 0 1 1.5 1.5 v11.6 a1.5 1.5 0 0 1 -1.5 1.5 h-10" fill="none" stroke="#2f2f2f" stroke-width="1.4"/><path d="M3 17 v2 h2" fill="none" stroke="#2f2f2f" stroke-width="1.4" stroke-dasharray="1.5 1.5"/>
<path d="M7.5 9 V18 M3 13.5 H12" stroke="#1a5cb8" stroke-width="2.4"/></svg>
<div class="b" style="left:281.00px;top:182.00px;width:17.00px;height:798.00px;background:#f3f3f3;"></div>
<div class="b" style="left:281.00px;top:203.50px;width:17.00px;height:743.50px;background:#c1c1c1;"></div>
<svg class="i" style="left:281.00px;top:182.00px;" width="17.5" height="21" viewBox="0 0 17.5 21"><path d="M4.8 13.5 L8.75 8.5 L12.7 13.5 Z" fill="#a3a3a3"/></svg>
<svg class="i" style="left:281.00px;top:962.00px;" width="17.5" height="21" viewBox="0 0 17.5 21"><path d="M4.8 8.5 L8.75 13.5 L12.7 8.5 Z" fill="#505050"/></svg>
<svg class="i" style="left:57.20px;top:188.10px;" width="19.4" height="19.4" viewBox="0 0 19.4 19.4"><path d="M0.6 0.6 H14.7 L18.8 4.4 V18.7 H4.4 L0.6 14.8 Z" fill="#fff" stroke="#505050" stroke-width="1.15" stroke-linejoin="round"/>
<path d="M1.4 1.4 H11 L13.7 4.4 V13.3 H4.4 L1.4 10.5 Z" fill="#8d8d8d"/><rect x="4.4" y="4.4" width="9.3" height="8.9" fill="#a2a2a2"/>
<path d="M0.6 0.6 L4.4 4.4 H18.8 M4.4 4.4 V18.7" fill="none" stroke="#505050" stroke-width="1.05"/></svg>
<div class="t" style="left:83.00px;top:188.30px;font-size:17.00px;line-height:20.40px;color:#3c3c3c;letter-spacing:-0.276px;">Full Robot</div>
<svg class="i" style="left:173.00px;top:186.00px;" width="13" height="23" viewBox="0 0 13 23"><path d="M6.5 0 V9" stroke="#2f2f2f" stroke-width="1.8"/><path d="M2.2 6 H10.8 L6.5 11.5 Z" fill="#2f2f2f"/><circle cx="6.5" cy="17" r="4.3" fill="#fff" stroke="#2f2f2f" stroke-width="1.4"/><circle cx="6.5" cy="17" r="1.7" fill="#2f2f2f"/></svg>
<svg class="i" style="left:86.00px;top:225.50px;" width="11" height="11" viewBox="0 0 11 11"><circle cx="5.5" cy="5.5" r="4.3" fill="#fff" stroke="#c4c4c4" stroke-width="1.1"/><circle cx="5.5" cy="5.5" r="1.8" fill="#c4c4c4"/></svg>
<div class="t" style="left:107.50px;top:221.30px;font-size:17.00px;line-height:20.40px;color:#a6a6a6;letter-spacing:-0.370px;">Origin</div>
<svg class="i" style="left:58.00px;top:254.90px;" width="11" height="16" viewBox="0 0 11 16"><path d="M1.6 1.4 L8.4 8 L1.6 14.6" fill="none" stroke="#707070" stroke-width="2.8"/></svg>
<svg class="i" style="left:82.20px;top:253.60px;" width="19.4" height="19.4" viewBox="0 0 19.4 19.4"><path d="M0.6 0.6 H14.7 L18.8 4.4 V18.7 H4.4 L0.6 14.8 Z" fill="#fff" stroke="#505050" stroke-width="1.15" stroke-linejoin="round"/>
<path d="M1.4 1.4 H11 L13.7 4.4 V13.3 H4.4 L1.4 10.5 Z" fill="#8d8d8d"/><rect x="4.4" y="4.4" width="9.3" height="8.9" fill="#a2a2a2"/>
<path d="M0.6 0.6 L4.4 4.4 H18.8 M4.4 4.4 V18.7" fill="none" stroke="#505050" stroke-width="1.05"/></svg>
<div class="t" style="left:108.00px;top:253.80px;font-size:17.00px;line-height:20.40px;color:#3c3c3c;letter-spacing:-0.537px;">1421-Dri...</div>
<svg class="i" style="left:201.00px;top:252.00px;" width="17" height="23" viewBox="0 0 17 23"><path d="M4.5 0 V5 M4.5 15 V22" stroke="#2f2f2f" stroke-width="1.8" stroke-dasharray="2 1.4"/><circle cx="4.5" cy="10" r="3.4" fill="#2f2f2f"/><circle cx="10.8" cy="15.8" r="6.2" fill="#6f9bd0" stroke="#fff" stroke-width="0.8"/><path d="M10.8 11.6 V17 M7.6 15.4 L10.8 19 L14 15.4" stroke="#fff" stroke-width="1.9" fill="none"/></svg>
<svg class="i" style="left:58.00px;top:287.40px;" width="11" height="16" viewBox="0 0 11 16"><path d="M1.6 1.4 L8.4 8 L1.6 14.6" fill="none" stroke="#707070" stroke-width="2.8"/></svg>
<svg class="i" style="left:82.20px;top:286.10px;" width="19.4" height="19.4" viewBox="0 0 19.4 19.4"><path d="M0.6 0.6 H14.7 L18.8 4.4 V18.7 H4.4 L0.6 14.8 Z" fill="#fff" stroke="#505050" stroke-width="1.15" stroke-linejoin="round"/>
<path d="M1.4 1.4 H11 L13.7 4.4 V13.3 H4.4 L1.4 10.5 Z" fill="#8d8d8d"/><rect x="4.4" y="4.4" width="9.3" height="8.9" fill="#a2a2a2"/>
<path d="M0.6 0.6 L4.4 4.4 H18.8 M4.4 4.4 V18.7" fill="none" stroke="#505050" stroke-width="1.05"/></svg>
<div class="t" style="left:108.00px;top:286.30px;font-size:17.00px;line-height:20.40px;color:#3c3c3c;letter-spacing:-0.405px;">1421-Int...</div>
<svg class="i" style="left:201.00px;top:284.50px;" width="17" height="23" viewBox="0 0 17 23"><path d="M4.5 0 V5 M4.5 15 V22" stroke="#2f2f2f" stroke-width="1.8" stroke-dasharray="2 1.4"/><circle cx="4.5" cy="10" r="3.4" fill="#2f2f2f"/><circle cx="10.8" cy="15.8" r="6.2" fill="#6f9bd0" stroke="#fff" stroke-width="0.8"/><path d="M10.8 11.6 V17 M7.6 15.4 L10.8 19 L14 15.4" stroke="#fff" stroke-width="1.9" fill="none"/></svg>
<svg class="i" style="left:58.00px;top:319.90px;" width="11" height="16" viewBox="0 0 11 16"><path d="M1.6 1.4 L8.4 8 L1.6 14.6" fill="none" stroke="#707070" stroke-width="2.8"/></svg>
<svg class="i" style="left:82.20px;top:318.60px;" width="19.4" height="19.4" viewBox="0 0 19.4 19.4"><path d="M0.6 0.6 H14.7 L18.8 4.4 V18.7 H4.4 L0.6 14.8 Z" fill="#fff" stroke="#505050" stroke-width="1.15" stroke-linejoin="round"/>
<path d="M1.4 1.4 H11 L13.7 4.4 V13.3 H4.4 L1.4 10.5 Z" fill="#8d8d8d"/><rect x="4.4" y="4.4" width="9.3" height="8.9" fill="#a2a2a2"/>
<path d="M0.6 0.6 L4.4 4.4 H18.8 M4.4 4.4 V18.7" fill="none" stroke="#505050" stroke-width="1.05"/></svg>
<div class="t" style="left:108.00px;top:318.80px;font-size:17.00px;line-height:20.40px;color:#3c3c3c;letter-spacing:-0.660px;">1421-Sh...</div>
<svg class="i" style="left:201.00px;top:317.00px;" width="17" height="23" viewBox="0 0 17 23"><path d="M4.5 0 V5 M4.5 15 V22" stroke="#2f2f2f" stroke-width="1.8" stroke-dasharray="2 1.4"/><circle cx="4.5" cy="10" r="3.4" fill="#2f2f2f"/><circle cx="10.8" cy="15.8" r="6.2" fill="#6f9bd0" stroke="#fff" stroke-width="0.8"/><path d="M10.8 11.6 V17 M7.6 15.4 L10.8 19 L14 15.4" stroke="#fff" stroke-width="1.9" fill="none"/></svg>
<svg class="i" style="left:58.00px;top:352.40px;" width="11" height="16" viewBox="0 0 11 16"><path d="M1.6 1.4 L8.4 8 L1.6 14.6" fill="none" stroke="#707070" stroke-width="2.8"/></svg>
<svg class="i" style="left:82.20px;top:351.10px;" width="19.4" height="19.4" viewBox="0 0 19.4 19.4"><path d="M0.6 0.6 H14.7 L18.8 4.4 V18.7 H4.4 L0.6 14.8 Z" fill="#fff" stroke="#505050" stroke-width="1.15" stroke-linejoin="round"/>
<path d="M1.4 1.4 H11 L13.7 4.4 V13.3 H4.4 L1.4 10.5 Z" fill="#8d8d8d"/><rect x="4.4" y="4.4" width="9.3" height="8.9" fill="#a2a2a2"/>
<path d="M0.6 0.6 L4.4 4.4 H18.8 M4.4 4.4 V18.7" fill="none" stroke="#505050" stroke-width="1.05"/><rect x="-1.5" y="-1" width="10" height="9" fill="#3b6fd0"/><path d="M-1.5 2 H8.5 M-1.5 5 H8.5 M1.8 -1 V8 M5.2 -1 V8" stroke="#c5d6f7" stroke-width="0.8"/></svg>
<div class="t" style="left:108.00px;top:351.30px;font-size:17.00px;line-height:20.40px;color:#3c3c3c;letter-spacing:-0.692px;">Generic ...</div>
<svg class="i" style="left:201.00px;top:349.50px;" width="17" height="23" viewBox="0 0 17 23"><path d="M4.5 0 V5 M4.5 15 V22" stroke="#2f2f2f" stroke-width="1.8" stroke-dasharray="2 1.4"/><circle cx="4.5" cy="10" r="3.4" fill="#2f2f2f"/></svg>
<svg class="i" style="left:58.00px;top:384.90px;" width="11" height="16" viewBox="0 0 11 16"><path d="M1.6 1.4 L8.4 8 L1.6 14.6" fill="none" stroke="#707070" stroke-width="2.8"/></svg>
<svg class="i" style="left:81.50px;top:385.00px;" width="21" height="17" viewBox="0 0 21 17"><path d="M1 2.2 a1.3 1.3 0 0 1 1.3 -1.3 h5.2 l2 2.4 h9.2 a1.3 1.3 0 0 1 1.3 1.3 v10 a1.3 1.3 0 0 1 -1.3 1.3 h-16.4 a1.3 1.3 0 0 1 -1.3 -1.3 z" fill="#fff" stroke="#555" stroke-width="1.2"/></svg>
<div class="t" style="left:108.00px;top:383.80px;font-size:17.00px;line-height:20.40px;color:#3c3c3c;letter-spacing:-0.430px;">Sketching (9)</div>
<svg class="i" style="left:58.00px;top:417.40px;" width="11" height="16" viewBox="0 0 11 16"><path d="M1.6 1.4 L8.4 8 L1.6 14.6" fill="none" stroke="#707070" stroke-width="2.8"/></svg>
<svg class="i" style="left:81.50px;top:417.50px;" width="21" height="17" viewBox="0 0 21 17"><path d="M1 2.2 a1.3 1.3 0 0 1 1.3 -1.3 h5.2 l2 2.4 h9.2 a1.3 1.3 0 0 1 1.3 1.3 v10 a1.3 1.3 0 0 1 -1.3 1.3 h-16.4 a1.3 1.3 0 0 1 -1.3 -1.3 z" fill="#fff" stroke="#555" stroke-width="1.2"/></svg>
<div class="t" style="left:108.00px;top:416.30px;font-size:17.00px;line-height:20.40px;color:#3c3c3c;letter-spacing:-0.260px;">Electronics (8)</div>
<svg class="i" style="left:54.80px;top:452.30px;" width="16" height="11" viewBox="0 0 16 11"><path d="M1.4 1.8 L8 8.4 L14.6 1.8" fill="none" stroke="#7a7a7a" stroke-width="2.8"/></svg>
<div class="t" style="left:79.00px;top:448.80px;font-size:17.00px;line-height:20.40px;color:#3c3c3c;letter-spacing:-0.540px;">Loads (0)</div>
<svg class="i" style="left:54.80px;top:484.80px;" width="16" height="11" viewBox="0 0 16 11"><path d="M1.4 1.8 L8 8.4 L14.6 1.8" fill="none" stroke="#7a7a7a" stroke-width="2.8"/></svg>
<div class="t" style="left:79.00px;top:481.30px;font-size:17.00px;line-height:20.40px;color:#3c3c3c;letter-spacing:-0.474px;">Mate Features (15)</div>
<div class="b" style="left:61.50px;top:507.50px;width:1.60px;height:478.00px;background:#bdbdbd;"></div>
<div class="b" style="left:50px;top:500px;width:256px;height:485px;overflow:hidden;">
<svg class="i" style="left:31.50px;top:14.90px;" width="11" height="16" viewBox="0 0 11 16"><path d="M1.6 1.4 L8.4 8 L1.6 14.6" fill="none" stroke="#7c7c7c" stroke-width="2.8"/></svg>
<svg class="i" style="left:57.30px;top:13.70px;" width="16" height="19" viewBox="0 0 16 19"><path d="M0.7 4.6 V14.2 A7.3 4 0 0 0 15.3 14.2 V4.6" fill="#d4d4d4" stroke="#cfcfcf" stroke-width="1"/>
<path d="M0.7 4.6 V9.2 Q3 10 5.4 9.6 V13 H10.6 V9.6 Q13 10 15.3 9.2 V4.6 Z" fill="#fff" stroke="#d9d9d9" stroke-width="0.8"/><ellipse cx="8" cy="4.6" rx="7.3" ry="3.9" fill="#fff" stroke="#d2d2d2" stroke-width="1.1"/></svg>
<div class="t" style="left:82.00px;top:13.80px;font-size:17.00px;line-height:20.40px;color:#9a9a9a;letter-spacing:-0.562px;">Fastened 2</div>
<svg class="i" style="left:56.00px;top:46.50px;" width="19" height="19" viewBox="0 0 19 19"><rect x="2" y="2" width="15" height="15" fill="none" stroke="#8a8a8a" stroke-width="1" stroke-dasharray="2.6 1.8"/><g fill="#fff" stroke="#8a8a8a" stroke-width="0.9"><rect x="0.6" y="0.6" width="2.6" height="2.6"/><rect x="15.8" y="0.6" width="2.6" height="2.6"/><rect x="0.6" y="15.8" width="2.6" height="2.6"/><rect x="15.8" y="15.8" width="2.6" height="2.6"/>
<rect x="8" y="8" width="6" height="6"/><rect x="5" y="5" width="6" height="6"/></g></svg>
<div class="t" style="left:82.00px;top:46.30px;font-size:17.00px;line-height:20.40px;color:#9a9a9a;letter-spacing:-0.905px;">Group 1</div>
<svg class="i" style="left:31.50px;top:79.90px;" width="11" height="16" viewBox="0 0 11 16"><path d="M1.6 1.4 L8.4 8 L1.6 14.6" fill="none" stroke="#7c7c7c" stroke-width="2.8"/></svg>
<svg class="i" style="left:58.00px;top:78.50px;" width="15" height="20" viewBox="0 0 15 20"><path d="M7.5 0.8 C3.5 0.8 0.8 3.6 0.8 7.2 C0.8 11.5 5 14.5 7.5 19 C10 14.5 14.2 11.5 14.2 7.2 C14.2 3.6 11.5 0.8 7.5 0.8 Z" fill="#fff" stroke="#9c9c9c" stroke-width="1.1"/><circle cx="7.5" cy="7" r="3.2" fill="none" stroke="#9c9c9c" stroke-width="1"/><circle cx="7.5" cy="7" r="1.3" fill="#9c9c9c"/></svg>
<div class="t" style="left:82.00px;top:78.80px;font-size:17.00px;line-height:20.40px;color:#9a9a9a;letter-spacing:-0.562px;">Fastened 6</div>
<svg class="i" style="left:31.50px;top:112.40px;" width="11" height="16" viewBox="0 0 11 16"><path d="M1.6 1.4 L8.4 8 L1.6 14.6" fill="none" stroke="#7c7c7c" stroke-width="2.8"/></svg>
<svg class="i" style="left:57.30px;top:111.20px;" width="16" height="19" viewBox="0 0 16 19"><path d="M0.7 4.6 V14.2 A7.3 4 0 0 0 15.3 14.2 V4.6" fill="#d4d4d4" stroke="#cfcfcf" stroke-width="1"/>
<path d="M0.7 4.6 V9.2 Q3 10 5.4 9.6 V13 H10.6 V9.6 Q13 10 15.3 9.2 V4.6 Z" fill="#fff" stroke="#d9d9d9" stroke-width="0.8"/><ellipse cx="8" cy="4.6" rx="7.3" ry="3.9" fill="#fff" stroke="#d2d2d2" stroke-width="1.1"/></svg>
<div class="t" style="left:82.00px;top:111.30px;font-size:17.00px;line-height:20.40px;color:#9a9a9a;letter-spacing:-0.618px;">Fastened 7</div>
<svg class="i" style="left:31.50px;top:144.90px;" width="11" height="16" viewBox="0 0 11 16"><path d="M1.6 1.4 L8.4 8 L1.6 14.6" fill="none" stroke="#7c7c7c" stroke-width="2.8"/></svg>
<svg class="i" style="left:57.30px;top:143.70px;" width="16" height="19" viewBox="0 0 16 19"><path d="M0.7 4.6 V14.2 A7.3 4 0 0 0 15.3 14.2 V4.6" fill="#d4d4d4" stroke="#cfcfcf" stroke-width="1"/>
<path d="M0.7 4.6 V9.2 Q3 10 5.4 9.6 V13 H10.6 V9.6 Q13 10 15.3 9.2 V4.6 Z" fill="#fff" stroke="#d9d9d9" stroke-width="0.8"/><ellipse cx="8" cy="4.6" rx="7.3" ry="3.9" fill="#fff" stroke="#d2d2d2" stroke-width="1.1"/></svg>
<div class="t" style="left:82.00px;top:143.80px;font-size:17.00px;line-height:20.40px;color:#9a9a9a;letter-spacing:-0.673px;">Fastened 1</div>
<svg class="i" style="left:31.50px;top:177.40px;" width="11" height="16" viewBox="0 0 11 16"><path d="M1.6 1.4 L8.4 8 L1.6 14.6" fill="none" stroke="#7c7c7c" stroke-width="2.8"/></svg>
<svg class="i" style="left:57.30px;top:176.20px;" width="16" height="19" viewBox="0 0 16 19"><path d="M0.7 4.6 V14.2 A7.3 4 0 0 0 15.3 14.2 V4.6" fill="#d4d4d4" stroke="#cfcfcf" stroke-width="1"/>
<path d="M0.7 4.6 V9.2 Q3 10 5.4 9.6 V13 H10.6 V9.6 Q13 10 15.3 9.2 V4.6 Z" fill="#fff" stroke="#d9d9d9" stroke-width="0.8"/><ellipse cx="8" cy="4.6" rx="7.3" ry="3.9" fill="#fff" stroke="#d2d2d2" stroke-width="1.1"/></svg>
<div class="t" style="left:82.00px;top:176.30px;font-size:17.00px;line-height:20.40px;color:#9a9a9a;letter-spacing:-0.562px;">Fastened 4</div>
<svg class="i" style="left:31.50px;top:209.90px;" width="11" height="16" viewBox="0 0 11 16"><path d="M1.6 1.4 L8.4 8 L1.6 14.6" fill="none" stroke="#7c7c7c" stroke-width="2.8"/></svg>
<svg class="i" style="left:57.30px;top:208.70px;" width="16" height="19" viewBox="0 0 16 19"><path d="M0.7 4.6 V14.2 A7.3 4 0 0 0 15.3 14.2 V4.6" fill="#d4d4d4" stroke="#cfcfcf" stroke-width="1"/>
<path d="M0.7 4.6 V9.2 Q3 10 5.4 9.6 V13 H10.6 V9.6 Q13 10 15.3 9.2 V4.6 Z" fill="#fff" stroke="#d9d9d9" stroke-width="0.8"/><ellipse cx="8" cy="4.6" rx="7.3" ry="3.9" fill="#fff" stroke="#d2d2d2" stroke-width="1.1"/></svg>
<div class="t" style="left:82.00px;top:208.80px;font-size:17.00px;line-height:20.40px;color:#9a9a9a;letter-spacing:-0.562px;">Fastened 8</div>
<svg class="i" style="left:31.50px;top:242.40px;" width="11" height="16" viewBox="0 0 11 16"><path d="M1.6 1.4 L8.4 8 L1.6 14.6" fill="none" stroke="#7c7c7c" stroke-width="2.8"/></svg>
<svg class="i" style="left:57.30px;top:241.20px;" width="16" height="19" viewBox="0 0 16 19"><path d="M0.7 4.6 V14.2 A7.3 4 0 0 0 15.3 14.2 V4.6" fill="#d4d4d4" stroke="#cfcfcf" stroke-width="1"/>
<path d="M0.7 4.6 V9.2 Q3 10 5.4 9.6 V13 H10.6 V9.6 Q13 10 15.3 9.2 V4.6 Z" fill="#fff" stroke="#d9d9d9" stroke-width="0.8"/><ellipse cx="8" cy="4.6" rx="7.3" ry="3.9" fill="#fff" stroke="#d2d2d2" stroke-width="1.1"/></svg>
<div class="t" style="left:82.00px;top:241.30px;font-size:17.00px;line-height:20.40px;color:#9a9a9a;letter-spacing:-0.562px;">Fastened 5</div>
<svg class="i" style="left:31.50px;top:274.90px;" width="11" height="16" viewBox="0 0 11 16"><path d="M1.6 1.4 L8.4 8 L1.6 14.6" fill="none" stroke="#7c7c7c" stroke-width="2.8"/></svg>
<svg class="i" style="left:57.30px;top:273.70px;" width="16" height="19" viewBox="0 0 16 19"><path d="M0.7 4.6 V14.2 A7.3 4 0 0 0 15.3 14.2 V4.6" fill="#d4d4d4" stroke="#cfcfcf" stroke-width="1"/>
<path d="M0.7 4.6 V9.2 Q3 10 5.4 9.6 V13 H10.6 V9.6 Q13 10 15.3 9.2 V4.6 Z" fill="#fff" stroke="#d9d9d9" stroke-width="0.8"/><ellipse cx="8" cy="4.6" rx="7.3" ry="3.9" fill="#fff" stroke="#d2d2d2" stroke-width="1.1"/></svg>
<div class="t" style="left:82.00px;top:273.80px;font-size:17.00px;line-height:20.40px;color:#9a9a9a;letter-spacing:-0.551px;">Fastened 10</div>
<svg class="i" style="left:31.50px;top:307.40px;" width="11" height="16" viewBox="0 0 11 16"><path d="M1.6 1.4 L8.4 8 L1.6 14.6" fill="none" stroke="#7c7c7c" stroke-width="2.8"/></svg>
<svg class="i" style="left:57.30px;top:306.20px;" width="16" height="19" viewBox="0 0 16 19"><path d="M0.7 4.6 V14.2 A7.3 4 0 0 0 15.3 14.2 V4.6" fill="#d4d4d4" stroke="#cfcfcf" stroke-width="1"/>
<path d="M0.7 4.6 V9.2 Q3 10 5.4 9.6 V13 H10.6 V9.6 Q13 10 15.3 9.2 V4.6 Z" fill="#fff" stroke="#d9d9d9" stroke-width="0.8"/><ellipse cx="8" cy="4.6" rx="7.3" ry="3.9" fill="#fff" stroke="#d2d2d2" stroke-width="1.1"/></svg>
<div class="t" style="left:82.00px;top:306.30px;font-size:17.00px;line-height:20.40px;color:#9a9a9a;letter-spacing:-0.575px;">Fastened 11</div>
<svg class="i" style="left:31.50px;top:339.90px;" width="11" height="16" viewBox="0 0 11 16"><path d="M1.6 1.4 L8.4 8 L1.6 14.6" fill="none" stroke="#7c7c7c" stroke-width="2.8"/></svg>
<svg class="i" style="left:57.30px;top:338.70px;" width="16" height="19" viewBox="0 0 16 19"><path d="M0.7 4.6 V14.2 A7.3 4 0 0 0 15.3 14.2 V4.6" fill="#d4d4d4" stroke="#cfcfcf" stroke-width="1"/>
<path d="M0.7 4.6 V9.2 Q3 10 5.4 9.6 V13 H10.6 V9.6 Q13 10 15.3 9.2 V4.6 Z" fill="#fff" stroke="#d9d9d9" stroke-width="0.8"/><ellipse cx="8" cy="4.6" rx="7.3" ry="3.9" fill="#fff" stroke="#d2d2d2" stroke-width="1.1"/></svg>
<div class="t" style="left:82.00px;top:338.80px;font-size:17.00px;line-height:20.40px;color:#9a9a9a;letter-spacing:-0.601px;">Fastened 12</div>
<svg class="i" style="left:31.50px;top:372.40px;" width="11" height="16" viewBox="0 0 11 16"><path d="M1.6 1.4 L8.4 8 L1.6 14.6" fill="none" stroke="#7c7c7c" stroke-width="2.8"/></svg>
<svg class="i" style="left:55.00px;top:372.00px;" width="21" height="19" viewBox="0 0 21 19"><path d="M3 4.5 V14 A7.5 3.8 0 0 0 18 14 V4.5" fill="#fff" stroke="#c0c0c0" stroke-width="1"/><ellipse cx="10.5" cy="4.5" rx="7.5" ry="3.6" fill="#fff" stroke="#c0c0c0" stroke-width="1.1"/>
<path d="M1.5 7 C0.5 10 3 11.5 5.5 11.4 M19.5 7 C20.5 10 18 11.5 15.5 11.4" fill="none" stroke="#9c9c9c" stroke-width="2"/><path d="M9 11.5 L5 8.5 V14.5 Z M12 11.5 L16 8.5 V14.5 Z" fill="#9c9c9c"/></svg>
<div class="t" style="left:82.00px;top:371.30px;font-size:17.00px;line-height:20.40px;color:#9a9a9a;letter-spacing:-0.531px;">Revolute 1</div>
<svg class="i" style="left:31.50px;top:404.90px;" width="11" height="16" viewBox="0 0 11 16"><path d="M1.6 1.4 L8.4 8 L1.6 14.6" fill="none" stroke="#7c7c7c" stroke-width="2.8"/></svg>
<svg class="i" style="left:55.00px;top:404.50px;" width="21" height="19" viewBox="0 0 21 19"><path d="M3 4.5 V14 A7.5 3.8 0 0 0 18 14 V4.5" fill="#fff" stroke="#c0c0c0" stroke-width="1"/><ellipse cx="10.5" cy="4.5" rx="7.5" ry="3.6" fill="#fff" stroke="#c0c0c0" stroke-width="1.1"/>
<path d="M1.5 7 C0.5 10 3 11.5 5.5 11.4 M19.5 7 C20.5 10 18 11.5 15.5 11.4" fill="none" stroke="#9c9c9c" stroke-width="2"/><path d="M9 11.5 L5 8.5 V14.5 Z M12 11.5 L16 8.5 V14.5 Z" fill="#9c9c9c"/></svg>
<div class="t" style="left:82.00px;top:403.80px;font-size:17.00px;line-height:20.40px;color:#9a9a9a;letter-spacing:-0.419px;">Revolute 2</div>
<svg class="i" style="left:31.50px;top:437.40px;" width="11" height="16" viewBox="0 0 11 16"><path d="M1.6 1.4 L8.4 8 L1.6 14.6" fill="none" stroke="#7c7c7c" stroke-width="2.8"/></svg>
<svg class="i" style="left:57.30px;top:436.20px;" width="16" height="19" viewBox="0 0 16 19"><path d="M0.7 4.6 V14.2 A7.3 4 0 0 0 15.3 14.2 V4.6" fill="#d4d4d4" stroke="#cfcfcf" stroke-width="1"/>
<path d="M0.7 4.6 V9.2 Q3 10 5.4 9.6 V13 H10.6 V9.6 Q13 10 15.3 9.2 V4.6 Z" fill="#fff" stroke="#d9d9d9" stroke-width="0.8"/><ellipse cx="8" cy="4.6" rx="7.3" ry="3.9" fill="#fff" stroke="#d2d2d2" stroke-width="1.1"/></svg>
<div class="t" style="left:82.00px;top:436.30px;font-size:17.00px;line-height:20.40px;color:#9a9a9a;letter-spacing:-0.562px;">Fastened 9</div>
<svg class="i" style="left:31.50px;top:469.90px;" width="11" height="16" viewBox="0 0 11 16"><path d="M1.6 1.4 L8.4 8 L1.6 14.6" fill="none" stroke="#7c7c7c" stroke-width="2.8"/></svg>
<svg class="i" style="left:57.30px;top:468.70px;" width="16" height="19" viewBox="0 0 16 19"><path d="M0.7 4.6 V14.2 A7.3 4 0 0 0 15.3 14.2 V4.6" fill="#d4d4d4" stroke="#cfcfcf" stroke-width="1"/>
<path d="M0.7 4.6 V9.2 Q3 10 5.4 9.6 V13 H10.6 V9.6 Q13 10 15.3 9.2 V4.6 Z" fill="#fff" stroke="#d9d9d9" stroke-width="0.8"/><ellipse cx="8" cy="4.6" rx="7.3" ry="3.9" fill="#fff" stroke="#d2d2d2" stroke-width="1.1"/></svg>
<div class="t" style="left:82.00px;top:468.80px;font-size:17.00px;line-height:20.40px;color:#9a9a9a;letter-spacing:-0.562px;">Fastened 3</div>
</div>
<div class="b" style="left:50.00px;top:985.00px;width:257.00px;height:1.20px;background:#cfcfcf;"></div>
<div class="b" style="left:305.50px;top:508.00px;width:42.90px;height:42.80px;background:#fff;border:1px solid #cfcfcf;border-left:0;"></div>
<svg class="i" style="left:310.00px;top:515.00px;" width="32" height="32" viewBox="0 0 32 32"><g fill="none" stroke="#3c3c3c"><path d="M4.8 5.4 L9 9.5 L13.2 5.4" stroke-width="1.5"/><path d="M9 11.8 V27.6" stroke-width="1.5"/><path d="M15.1 7 H28 M11.7 13.5 H28 M11.7 19.6 H28 M11.7 25.8 H28" stroke-width="1.5"/></g></svg>
<svg class="i" style="left:61.00px;top:994.30px;" width="19" height="19" viewBox="0 0 19 19"><path d="M9.5 0 V19 M0 9.5 H19" stroke="#555" stroke-width="3.4"/></svg>
<svg class="i" style="left:114.50px;top:992.40px;" width="18" height="18" viewBox="0 0 18 18"><circle cx="9" cy="9" r="8.6" fill="#6f9fd6"/><path d="M9 3.5 V11 M5 8.8 L9 13.6 L13 8.8" stroke="#fff" stroke-width="2.6" fill="none"/></svg>
<svg class="i" style="left:137.20px;top:990.41px;" width="22.892" height="22.892" viewBox="0 0 19.4 19.4"><path d="M0.6 0.6 H14.7 L18.8 4.4 V18.7 H4.4 L0.6 14.8 Z" fill="#fff" stroke="#505050" stroke-width="1.15" stroke-linejoin="round"/>
<path d="M1.4 1.4 H11 L13.7 4.4 V13.3 H4.4 L1.4 10.5 Z" fill="#8d8d8d"/><rect x="4.4" y="4.4" width="9.3" height="8.9" fill="#a2a2a2"/>
<path d="M0.6 0.6 L4.4 4.4 H18.8 M4.4 4.4 V18.7" fill="none" stroke="#505050" stroke-width="1.05"/></svg>
<div class="t" style="left:165.00px;top:992.70px;font-size:18.00px;line-height:21.60px;color:#333;letter-spacing:-0.338px;">Full Robot</div>
<svg class="i" style="left:365.00px;top:992.00px;" width="23" height="22" viewBox="0 0 23 22"><g fill="#e9e9e9" stroke="#3a3a3a" stroke-width="1.4" stroke-linejoin="round"><path d="M2 5 L8 2.5 V18.5 L2 21 Z"/><path d="M8 2.5 L12 4.5 V20.5 L8 18.5"/><path d="M12 3.5 H20.5 V20.5 H12 Z"/></g></svg>
<div class="t" style="left:392.50px;top:992.70px;font-size:18.00px;line-height:21.60px;color:#555;letter-spacing:-0.185px;">Mastersketch</div>
<svg class="i" style="left:617.00px;top:993.00px;" width="23" height="18" viewBox="0 0 23 18"><path d="M1 2.2 a1.3 1.3 0 0 1 1.3 -1.3 h6 l2.2 2.6 h10 a1.3 1.3 0 0 1 1.3 1.3 v10.6 a1.3 1.3 0 0 1 -1.3 1.3 h-18.2 a1.3 1.3 0 0 1 -1.3 -1.3 z" fill="#fff" stroke="#3a3a3a" stroke-width="1.4"/></svg>
<div class="t" style="left:645.00px;top:992.70px;font-size:18.00px;line-height:21.60px;color:#555;letter-spacing:-0.754px;">CrayonCAD</div>
<svg class="i" style="left:0;top:0" width="1567" height="1016" viewBox="0 0 1567 1016">
<defs>
<linearGradient id="pside" gradientUnits="userSpaceOnUse" x1="1018" y1="380" x2="1180" y2="350"><stop offset="0" stop-color="#7a5683"/><stop offset="0.4" stop-color="#62456b"/><stop offset="0.75" stop-color="#83608c"/><stop offset="1" stop-color="#9a72a4"/></linearGradient>
<linearGradient id="roll" gradientUnits="userSpaceOnUse" x1="0" y1="0" x2="0" y2="26"><stop offset="0" stop-color="#8a8a8a"/><stop offset="0.2" stop-color="#f2f2f2"/><stop offset="0.55" stop-color="#c9c9c9"/><stop offset="1" stop-color="#6a6a6a"/></linearGradient>
<linearGradient id="dcyl" gradientUnits="userSpaceOnUse" x1="0" y1="0" x2="0" y2="46"><stop offset="0" stop-color="#3d4444"/><stop offset="0.5" stop-color="#2f3535"/><stop offset="1" stop-color="#1a1d1d"/></linearGradient>
<linearGradient id="fl_round" gradientUnits="userSpaceOnUse" x1="740" y1="778" x2="731" y2="812"><stop offset="0" stop-color="#2bb3aa"/><stop offset="0.5" stop-color="#1f9d96"/><stop offset="1" stop-color="#15837e"/></linearGradient>
<linearGradient id="fr_round" gradientUnits="userSpaceOnUse" x1="1138" y1="730" x2="1156" y2="755"><stop offset="0" stop-color="#27aaa1"/><stop offset="0.35" stop-color="#34c2b7"/><stop offset="1" stop-color="#1b968f"/></linearGradient>
<linearGradient id="tread" x1="0" y1="0" x2="0.3" y2="1"><stop offset="0" stop-color="#dcdcdc"/><stop offset="0.6" stop-color="#cecece"/><stop offset="1" stop-color="#a6a6a6"/></linearGradient>
<pattern id="spk" width="9" height="9" patternUnits="userSpaceOnUse" patternTransform="rotate(12)"><rect width="9" height="9" fill="#303030"/><path d="M0 0 L9 9 M9 0 L0 9" stroke="#b5b5b5" stroke-width="1"/><circle cx="4.5" cy="4.5" r="2.4" fill="#3c3c3c" stroke="#9a9a9a" stroke-width="0.8"/></pattern>
<pattern id="perf" width="5" height="5" patternUnits="userSpaceOnUse" patternTransform="rotate(16)"><rect width="5" height="5" fill="#3b3b3b"/><circle cx="2.5" cy="2.5" r="1" fill="#151515"/></pattern>
</defs>
<path d="M1014.3 334.5 L1014.8 329.6 L1015.8 324.6 L1017.4 319.7 L1019.5 314.8 L1022.2 310.0 L1025.5 305.3 L1029.2 300.8 L1033.5 296.5 L1038.2 292.4 L1043.2 288.6 L1048.7 285.1 L1054.5 281.9 L1060.6 279.1 L1066.9 276.6 L1073.4 274.5 L1080.0 272.8 L1086.8 271.5 L1093.6 270.7 L1100.3 270.3 L1107.1 270.3 L1113.6 270.7 L1120.1 271.6 L1126.3 272.9 L1132.3 274.6 L1137.9 276.7 L1143.2 279.2 L1148.1 282.1 L1152.6 285.3 L1156.6 288.8 L1160.2 292.6 L1163.2 296.7 L1165.7 301.0 L1167.6 305.5 L1168.9 310.2 L1175.6 348.0 L1176.4 352.7 L1176.5 357.5 L1176.1 362.3 L1175.1 367.1 L1173.6 372.0 L1171.5 376.7 L1168.8 381.4 L1165.6 386.0 L1162.0 390.3 L1157.9 394.5 L1153.3 398.5 L1148.3 402.2 L1143.0 405.6 L1137.4 408.7 L1131.4 411.5 L1125.3 413.9 L1118.9 416.0 L1112.5 417.6 L1105.9 418.9 L1099.3 419.7 L1092.7 420.1 L1086.1 420.1 L1079.7 419.7 L1073.4 418.8 L1067.4 417.6 L1061.6 415.9 L1056.0 413.8 L1050.9 411.4 L1046.1 408.6 L1041.7 405.5 L1037.8 402.1 L1034.3 398.3 L1031.4 394.4 L1029.0 390.2 L1027.1 385.8 L1016.6 348.9 L1015.3 344.2 L1014.5 339.4 Z" fill="url(#pside)" stroke="#3b2342" stroke-width="1.3" stroke-linejoin="round" />
<ellipse cx="1092.1" cy="327.2" rx="78.7" ry="55.7" fill="#a575b0" transform="rotate(-12.5 1092.1 327.2)" stroke="#3b2342" stroke-width="1.3" />
<path d="M527.0 694.0 L584.5 645.0 L612.0 640.0 L600.0 690.0 L566.8 702.7 Z" fill="#22a69e" />
<path d="M1205.0 584.0 L1240.0 592.0 L1262.0 600.0 L1230.0 630.0 L1200.0 610.0 Z" fill="#22a69e" />
<path d="M566.8 702.7 L597.3 677.0 L608.0 698.7 L597.3 711.5 Z" fill="#d8d3c6" stroke="#222" stroke-width="0.8" stroke-linejoin="round" />
<path d="M592.0 592.0 L597.4 505.0 L605.0 487.0 L635.0 476.0 L639.0 464.0 L650.0 452.0 L660.0 449.0 L675.0 457.0 L681.0 467.0 L700.0 473.0 L793.3 345.2 L841.0 362.5 L851.6 378.6 L904.0 411.6 L945.3 442.0 L1028.0 468.0 L1058.3 455.7 L1114.8 455.7 L1122.0 444.0 L1163.2 448.0 L1169.0 453.0 L1210.0 583.4 L1212.6 615.3 L1215.0 620.6 L983.0 819.8 L600.0 712.0 L606.0 690.0 L591.6 679.6 L585.0 640.0 Z" fill="#232526" stroke="#0c0c0c" stroke-width="1.2" stroke-linejoin="round" />
<path d="M701.6 470.2 L793.3 345.2 L841.0 362.5 L851.7 375.8 L835.8 381.0 L819.8 394.4 L756.0 500.7 L718.8 490.0 Z" fill="#484849" stroke="#0d0d0d" stroke-width="1" stroke-linejoin="round" />
<path d="M701.6 470.2 L793.3 345.2 L806.0 346.0" fill="none" stroke="#0d0d0d" stroke-width="3.2" stroke-linecap="round" stroke-linejoin="round" />
<g fill="none" stroke="#0e0e0e" stroke-width="1.6" stroke-linejoin="round" transform="translate(750,462) rotate(27)"><path d="M3 -46 L8 -26 L-2 -24 Z"/><path d="M-2 -24 L8 -26 C14 -14 14 10 10 36 H-12 C-18 16 -14 -10 -2 -24 Z"/><rect x="-3" y="-16" width="8" height="9"/><path d="M-5 -2 V34 M2 -2 V34"/><path d="M-11 8 l2 2 m-2 0 l2 -2 M8 6 l2 2 m-2 0 l2 -2 M-12 24 l2 2 m-2 0 l2 -2" stroke-width="1.2"/></g>
<path d="M835.8 381.0 L851.7 375.8 L904.0 411.6 L912.0 436.0 L846.0 533.0 L756.0 500.7 L819.8 394.4 Z" fill="#161717" />
<path d="M800.0 462.0 L812.0 466.0 L780.0 515.0 L768.0 511.0 Z" fill="#4a5a57" />
<path d="M826.0 432.0 L842.0 437.0 L826.0 462.0 L812.0 457.0 Z" fill="#3c3c3c" />
<path d="M829.0 399.0 L754.0 506.0" fill="none" stroke="#050505" stroke-width="3.6" stroke-linecap="round" stroke-linejoin="round" />
<path d="M830.2 399.8 L755.2 506.8" fill="none" stroke="#4a4a4a" stroke-width="0.9" stroke-linecap="round" stroke-linejoin="round" />
<path d="M858.0 414.0 L786.0 519.0" fill="none" stroke="#050505" stroke-width="3.6" stroke-linecap="round" stroke-linejoin="round" />
<path d="M859.2 414.8 L787.2 519.8" fill="none" stroke="#4a4a4a" stroke-width="0.9" stroke-linecap="round" stroke-linejoin="round" />
<path d="M888.0 428.0 L820.0 530.0" fill="none" stroke="#050505" stroke-width="3.6" stroke-linecap="round" stroke-linejoin="round" />
<path d="M889.2 428.8 L821.2 530.8" fill="none" stroke="#4a4a4a" stroke-width="0.9" stroke-linecap="round" stroke-linejoin="round" />
<ellipse cx="832.0" cy="390.0" rx="11.0" ry="8.5" fill="#070707" transform="rotate(-30.0 832.0 390.0)" />
<path d="M819.0 400.9 L819.1 400.3 L819.3 399.6 L819.5 399.0 L819.8 398.4 L820.1 397.8 L823.1 392.8 L823.5 392.2 L823.9 391.7 L824.4 391.2 L825.5 390.2 L826.1 389.8 L827.4 389.0 L828.1 388.7 L828.8 388.5 L830.2 388.1 L830.9 388.0 L832.9 388.0 L833.5 388.1 L834.2 388.3 L834.8 388.5 L836.3 389.4 L836.7 389.8 L837.4 390.8 L837.6 391.3 L837.8 391.8 L838.0 392.4 L838.0 394.1 L837.9 394.7 L837.7 395.4 L837.5 396.0 L837.2 396.6 L836.9 397.2 L833.9 402.2 L833.5 402.8 L833.1 403.3 L832.6 403.8 L831.5 404.8 L830.9 405.2 L829.6 406.0 L828.9 406.3 L828.2 406.5 L826.8 406.9 L826.1 407.0 L824.1 407.0 L823.5 406.9 L822.8 406.7 L822.2 406.5 L820.7 405.6 L820.3 405.2 L819.6 404.2 L819.4 403.7 L819.2 403.2 L819.0 402.6 Z" fill="#0c4f4b" stroke="#031f1e" stroke-width="0.8" stroke-linejoin="round" />
<ellipse cx="830.0" cy="395.0" rx="8.5" ry="6.5" fill="#15706a" transform="rotate(-30.0 830.0 395.0)" stroke="#031f1e" stroke-width="0.8" />
<ellipse cx="861.0" cy="405.0" rx="11.0" ry="8.5" fill="#070707" transform="rotate(-30.0 861.0 405.0)" />
<path d="M848.0 415.9 L848.1 415.3 L848.3 414.6 L848.5 414.0 L848.8 413.4 L849.1 412.8 L852.1 407.8 L852.5 407.2 L852.9 406.7 L853.4 406.2 L854.5 405.2 L855.1 404.8 L856.4 404.0 L857.1 403.7 L857.8 403.5 L859.2 403.1 L859.9 403.0 L861.9 403.0 L862.5 403.1 L863.2 403.3 L863.8 403.5 L865.3 404.4 L865.7 404.8 L866.4 405.8 L866.6 406.3 L866.8 406.8 L867.0 407.4 L867.0 409.1 L866.9 409.7 L866.7 410.4 L866.5 411.0 L866.2 411.6 L865.9 412.2 L862.9 417.2 L862.5 417.8 L862.1 418.3 L861.6 418.8 L860.5 419.8 L859.9 420.2 L858.6 421.0 L857.9 421.3 L857.2 421.5 L855.8 421.9 L855.1 422.0 L853.1 422.0 L852.5 421.9 L851.8 421.7 L851.2 421.5 L849.7 420.6 L849.3 420.2 L848.6 419.2 L848.4 418.7 L848.2 418.2 L848.0 417.6 Z" fill="#0c4f4b" stroke="#031f1e" stroke-width="0.8" stroke-linejoin="round" />
<ellipse cx="859.0" cy="410.0" rx="8.5" ry="6.5" fill="#15706a" transform="rotate(-30.0 859.0 410.0)" stroke="#031f1e" stroke-width="0.8" />
<ellipse cx="892.0" cy="419.0" rx="11.0" ry="8.5" fill="#070707" transform="rotate(-30.0 892.0 419.0)" />
<path d="M879.0 429.9 L879.1 429.3 L879.3 428.6 L879.5 428.0 L879.8 427.4 L880.1 426.8 L883.1 421.8 L883.5 421.2 L883.9 420.7 L884.4 420.2 L885.5 419.2 L886.1 418.8 L887.4 418.0 L888.1 417.7 L888.8 417.5 L890.2 417.1 L890.9 417.0 L892.9 417.0 L893.5 417.1 L894.2 417.3 L894.8 417.5 L896.3 418.4 L896.7 418.8 L897.4 419.8 L897.6 420.3 L897.8 420.8 L898.0 421.4 L898.0 423.1 L897.9 423.7 L897.7 424.4 L897.5 425.0 L897.2 425.6 L896.9 426.2 L893.9 431.2 L893.5 431.8 L893.1 432.3 L892.6 432.8 L891.5 433.8 L890.9 434.2 L889.6 435.0 L888.9 435.3 L888.2 435.5 L886.8 435.9 L886.1 436.0 L884.1 436.0 L883.5 435.9 L882.8 435.7 L882.2 435.5 L880.7 434.6 L880.3 434.2 L879.6 433.2 L879.4 432.7 L879.2 432.2 L879.0 431.6 Z" fill="#0c4f4b" stroke="#031f1e" stroke-width="0.8" stroke-linejoin="round" />
<ellipse cx="890.0" cy="424.0" rx="8.5" ry="6.5" fill="#15706a" transform="rotate(-30.0 890.0 424.0)" stroke="#031f1e" stroke-width="0.8" />
<path d="M838.0 377.0 L851.6 378.6 L904.0 411.6 L945.3 442.0" fill="none" stroke="#d9d9d9" stroke-width="1.6" stroke-linecap="round" stroke-linejoin="round" />
<path d="M838.0 378.5 L851.6 380.4 L904.0 413.4 L945.3 443.6" fill="none" stroke="#1a1a1a" stroke-width="0.9" stroke-linecap="round" stroke-linejoin="round" />
<path d="M808.0 372.0 L810.0 395.0" fill="none" stroke="#1a1a1a" stroke-width="2.4" stroke-linecap="round" stroke-linejoin="round" />
<ellipse cx="808.0" cy="377.0" rx="7.5" ry="4.5" fill="#3c3c3c" stroke="#111" stroke-width="0.8" />
<ellipse cx="807.5" cy="369.0" rx="15.5" ry="7.5" fill="#141414" />
<path d="M791.5 361.0 L791.7 359.4 L795.2 347.8 L796.0 346.4 L796.5 345.8 L797.1 345.1 L797.7 344.5 L799.3 343.5 L800.1 343.0 L801.0 342.6 L803.0 342.0 L805.1 341.6 L806.2 341.5 L808.4 341.5 L809.5 341.6 L811.6 342.0 L812.6 342.3 L813.5 342.6 L814.5 343.0 L816.1 344.0 L816.9 344.5 L817.5 345.1 L818.1 345.8 L818.6 346.4 L819.4 347.8 L823.3 359.4 L823.5 361.0 L823.3 362.6 L823.0 363.3 L822.5 364.1 L822.0 364.8 L821.4 365.5 L820.6 366.2 L819.8 366.8 L818.8 367.4 L817.8 367.9 L816.7 368.4 L815.5 368.8 L814.3 369.2 L813.0 369.5 L810.3 369.9 L808.9 370.0 L806.1 370.0 L804.7 369.9 L802.0 369.5 L800.7 369.2 L799.5 368.8 L798.3 368.4 L797.2 367.9 L796.2 367.4 L795.2 366.8 L794.4 366.2 L793.6 365.5 L793.0 364.8 L792.5 364.1 L792.0 363.3 L791.7 362.6 Z" fill="#dca010" stroke="#4a3200" stroke-width="1" stroke-linejoin="round" />
<ellipse cx="807.3" cy="349.5" rx="11.8" ry="7.8" fill="#efb313" stroke="#7a5400" stroke-width="0.9" />
<ellipse cx="807.3" cy="349.3" rx="7.2" ry="4.8" fill="#f6c02a" stroke="#8a6000" stroke-width="1" />
<path d="M904.0 436.4 L917.8 440.6 L850.9 534.9 L838.2 530.0 Z" fill="#1c938c" stroke="#05302e" stroke-width="0.9" stroke-linejoin="round" />
<path d="M910.0 437.0 L945.3 442.0 L1028.0 468.0 L1040.0 476.0 L985.0 560.0 L848.0 532.0 Z" fill="#0b0b0b" />
<path d="M918.0 449.0 L1028.0 481.0" fill="none" stroke="#050505" stroke-width="13" stroke-linecap="round" stroke-linejoin="round" />
<path d="M921.0 444.0 L1025.0 476.0" fill="none" stroke="#2a2a2a" stroke-width="1" stroke-linecap="round" stroke-linejoin="round" />
<path d="M903.8 447.8 L904.0 446.2 L904.2 445.4 L904.4 444.7 L905.0 443.2 L905.7 441.9 L906.1 441.3 L906.6 440.7 L907.5 439.8 L908.1 439.3 L909.1 438.7 L910.2 438.3 L910.8 438.2 L911.8 438.2 L912.3 438.3 L922.3 441.3 L923.3 441.7 L923.8 442.0 L924.2 442.4 L924.6 442.8 L924.9 443.2 L925.5 444.3 L925.9 445.6 L926.1 446.3 L926.2 447.0 L926.2 449.2 L926.0 450.8 L925.8 451.6 L925.6 452.3 L925.0 453.8 L924.3 455.1 L923.9 455.7 L923.4 456.3 L922.5 457.2 L921.9 457.7 L920.9 458.3 L919.8 458.7 L919.2 458.8 L918.2 458.8 L917.7 458.7 L907.7 455.7 L906.7 455.3 L906.2 455.0 L905.8 454.6 L905.4 454.2 L905.1 453.8 L904.5 452.7 L904.1 451.4 L903.9 450.7 L903.8 450.0 Z" fill="#16807a" stroke="#031f1e" stroke-width="0.8" stroke-linejoin="round" />
<ellipse cx="910.0" cy="447.0" rx="6.0" ry="9.0" fill="#0e5753" transform="rotate(15.0 910.0 447.0)" stroke="#031f1e" stroke-width="0.8" />
<path d="M1019.7 481.0 L1019.8 480.1 L1020.2 478.4 L1020.7 476.8 L1021.4 475.2 L1021.8 474.5 L1022.7 473.2 L1023.2 472.6 L1023.7 472.1 L1024.3 471.6 L1024.8 471.2 L1025.3 470.9 L1025.9 470.6 L1026.4 470.4 L1027.5 470.2 L1028.1 470.2 L1028.6 470.3 L1036.6 472.8 L1037.1 473.0 L1037.6 473.3 L1038.0 473.6 L1038.4 474.0 L1038.8 474.4 L1039.1 474.9 L1039.4 475.5 L1039.7 476.1 L1039.9 476.8 L1040.1 477.5 L1040.2 478.2 L1040.3 479.0 L1040.3 481.5 L1040.2 482.4 L1039.8 484.1 L1039.3 485.7 L1038.6 487.3 L1038.2 488.0 L1037.3 489.3 L1036.8 489.9 L1036.3 490.4 L1035.7 490.9 L1035.2 491.3 L1034.7 491.6 L1034.1 491.9 L1033.6 492.1 L1032.5 492.3 L1031.9 492.3 L1031.4 492.2 L1023.4 489.7 L1022.9 489.5 L1022.4 489.2 L1022.0 488.9 L1021.2 488.1 L1020.9 487.6 L1020.3 486.4 L1019.9 485.0 L1019.8 484.3 L1019.7 483.5 Z" fill="#17857f" stroke="#031f1e" stroke-width="0.8" stroke-linejoin="round" />
<path d="M901.0 472.0 L1011.0 504.0" fill="none" stroke="#050505" stroke-width="13" stroke-linecap="round" stroke-linejoin="round" />
<path d="M904.0 467.0 L1008.0 499.0" fill="none" stroke="#2a2a2a" stroke-width="1" stroke-linecap="round" stroke-linejoin="round" />
<path d="M886.8 470.8 L887.0 469.2 L887.2 468.4 L887.4 467.7 L888.0 466.2 L888.7 464.9 L889.1 464.3 L889.6 463.7 L890.5 462.8 L891.1 462.3 L892.1 461.7 L893.2 461.3 L893.8 461.2 L894.8 461.2 L895.3 461.3 L905.3 464.3 L906.3 464.7 L906.8 465.0 L907.2 465.4 L907.6 465.8 L907.9 466.2 L908.5 467.3 L908.9 468.6 L909.1 469.3 L909.2 470.0 L909.2 472.2 L909.0 473.8 L908.8 474.6 L908.6 475.3 L908.0 476.8 L907.3 478.1 L906.9 478.7 L906.4 479.3 L905.5 480.2 L904.9 480.7 L903.9 481.3 L902.8 481.7 L902.2 481.8 L901.2 481.8 L900.7 481.7 L890.7 478.7 L889.7 478.3 L889.2 478.0 L888.8 477.6 L888.4 477.2 L888.1 476.8 L887.5 475.7 L887.1 474.4 L886.9 473.7 L886.8 473.0 Z" fill="#16807a" stroke="#031f1e" stroke-width="0.8" stroke-linejoin="round" />
<ellipse cx="893.0" cy="470.0" rx="6.0" ry="9.0" fill="#0e5753" transform="rotate(15.0 893.0 470.0)" stroke="#031f1e" stroke-width="0.8" />
<path d="M1002.7 504.0 L1002.8 503.1 L1003.2 501.4 L1003.7 499.8 L1004.4 498.2 L1004.8 497.5 L1005.7 496.2 L1006.2 495.6 L1006.7 495.1 L1007.3 494.6 L1007.8 494.2 L1008.3 493.9 L1008.9 493.6 L1009.4 493.4 L1010.5 493.2 L1011.1 493.2 L1011.6 493.3 L1019.6 495.8 L1020.1 496.0 L1020.6 496.3 L1021.0 496.6 L1021.8 497.4 L1022.1 497.9 L1022.7 499.1 L1023.1 500.5 L1023.2 501.2 L1023.3 502.0 L1023.3 504.5 L1023.2 505.4 L1022.8 507.1 L1022.3 508.7 L1021.6 510.3 L1021.2 511.0 L1020.3 512.3 L1019.8 512.9 L1019.3 513.4 L1018.7 513.9 L1018.2 514.3 L1017.7 514.6 L1017.1 514.9 L1016.6 515.1 L1015.5 515.3 L1014.9 515.3 L1014.4 515.2 L1006.4 512.7 L1005.9 512.5 L1005.4 512.2 L1005.0 511.9 L1004.2 511.1 L1003.9 510.6 L1003.3 509.4 L1002.9 508.0 L1002.8 507.3 L1002.7 506.5 Z" fill="#17857f" stroke="#031f1e" stroke-width="0.8" stroke-linejoin="round" />
<path d="M884.0 496.0 L996.0 527.0" fill="none" stroke="#050505" stroke-width="13" stroke-linecap="round" stroke-linejoin="round" />
<path d="M887.0 491.0 L993.0 522.0" fill="none" stroke="#2a2a2a" stroke-width="1" stroke-linecap="round" stroke-linejoin="round" />
<path d="M869.8 494.8 L870.0 493.2 L870.2 492.4 L870.4 491.7 L871.0 490.2 L871.7 488.9 L872.1 488.3 L872.6 487.7 L873.5 486.8 L874.1 486.3 L875.1 485.7 L876.2 485.3 L876.8 485.2 L877.8 485.2 L878.3 485.3 L888.3 488.3 L889.3 488.7 L889.8 489.0 L890.2 489.4 L890.6 489.8 L890.9 490.2 L891.5 491.3 L891.9 492.6 L892.1 493.3 L892.2 494.0 L892.2 496.2 L892.0 497.8 L891.8 498.6 L891.6 499.3 L891.0 500.8 L890.3 502.1 L889.9 502.7 L889.4 503.3 L888.5 504.2 L887.9 504.7 L886.9 505.3 L885.8 505.7 L885.2 505.8 L884.2 505.8 L883.7 505.7 L873.7 502.7 L872.7 502.3 L872.2 502.0 L871.8 501.6 L871.4 501.2 L871.1 500.8 L870.5 499.7 L870.1 498.4 L869.9 497.7 L869.8 497.0 Z" fill="#16807a" stroke="#031f1e" stroke-width="0.8" stroke-linejoin="round" />
<ellipse cx="876.0" cy="494.0" rx="6.0" ry="9.0" fill="#0e5753" transform="rotate(15.0 876.0 494.0)" stroke="#031f1e" stroke-width="0.8" />
<path d="M987.7 527.0 L987.8 526.1 L988.2 524.4 L988.7 522.8 L989.4 521.2 L989.8 520.5 L990.7 519.2 L991.2 518.6 L991.7 518.1 L992.3 517.6 L992.8 517.2 L993.3 516.9 L993.9 516.6 L994.4 516.4 L995.5 516.2 L996.1 516.2 L996.6 516.3 L1004.6 518.8 L1005.1 519.0 L1005.6 519.3 L1006.0 519.6 L1006.8 520.4 L1007.1 520.9 L1007.7 522.1 L1008.1 523.5 L1008.2 524.2 L1008.3 525.0 L1008.3 527.5 L1008.2 528.4 L1007.8 530.1 L1007.3 531.7 L1006.6 533.3 L1006.2 534.0 L1005.3 535.3 L1004.8 535.9 L1004.3 536.4 L1003.7 536.9 L1003.2 537.3 L1002.7 537.6 L1002.1 537.9 L1001.6 538.1 L1000.5 538.3 L999.9 538.3 L999.4 538.2 L991.4 535.7 L990.9 535.5 L990.4 535.2 L990.0 534.9 L989.2 534.1 L988.9 533.6 L988.3 532.4 L987.9 531.0 L987.8 530.3 L987.7 529.5 Z" fill="#17857f" stroke="#031f1e" stroke-width="0.8" stroke-linejoin="round" />
<path d="M867.0 519.0 L980.0 550.0" fill="none" stroke="#050505" stroke-width="13" stroke-linecap="round" stroke-linejoin="round" />
<path d="M870.0 514.0 L977.0 545.0" fill="none" stroke="#2a2a2a" stroke-width="1" stroke-linecap="round" stroke-linejoin="round" />
<path d="M852.8 517.8 L853.0 516.2 L853.2 515.4 L853.4 514.7 L854.0 513.2 L854.7 511.9 L855.1 511.3 L855.6 510.7 L856.5 509.8 L857.1 509.3 L858.1 508.7 L859.2 508.3 L859.8 508.2 L860.8 508.2 L861.3 508.3 L871.3 511.3 L872.3 511.7 L872.8 512.0 L873.2 512.4 L873.6 512.8 L873.9 513.2 L874.5 514.3 L874.9 515.6 L875.1 516.3 L875.2 517.0 L875.2 519.2 L875.0 520.8 L874.8 521.6 L874.6 522.3 L874.0 523.8 L873.3 525.1 L872.9 525.7 L872.4 526.3 L871.5 527.2 L870.9 527.7 L869.9 528.3 L868.8 528.7 L868.2 528.8 L867.2 528.8 L866.7 528.7 L856.7 525.7 L855.7 525.3 L855.2 525.0 L854.8 524.6 L854.4 524.2 L854.1 523.8 L853.5 522.7 L853.1 521.4 L852.9 520.7 L852.8 520.0 Z" fill="#16807a" stroke="#031f1e" stroke-width="0.8" stroke-linejoin="round" />
<ellipse cx="859.0" cy="517.0" rx="6.0" ry="9.0" fill="#0e5753" transform="rotate(15.0 859.0 517.0)" stroke="#031f1e" stroke-width="0.8" />
<path d="M971.7 550.0 L971.8 549.1 L972.2 547.4 L972.7 545.8 L973.4 544.2 L973.8 543.5 L974.7 542.2 L975.2 541.6 L975.7 541.1 L976.3 540.6 L976.8 540.2 L977.3 539.9 L977.9 539.6 L978.4 539.4 L979.5 539.2 L980.1 539.2 L980.6 539.3 L988.6 541.8 L989.1 542.0 L989.6 542.3 L990.0 542.6 L990.8 543.4 L991.1 543.9 L991.7 545.1 L992.1 546.5 L992.2 547.2 L992.3 548.0 L992.3 550.5 L992.2 551.4 L991.8 553.1 L991.3 554.7 L990.6 556.3 L990.2 557.0 L989.3 558.3 L988.8 558.9 L988.3 559.4 L987.7 559.9 L987.2 560.3 L986.7 560.6 L986.1 560.9 L985.6 561.1 L984.5 561.3 L983.9 561.3 L983.4 561.2 L975.4 558.7 L974.9 558.5 L974.4 558.2 L974.0 557.9 L973.2 557.1 L972.9 556.6 L972.3 555.4 L971.9 554.0 L971.8 553.3 L971.7 552.5 Z" fill="#17857f" stroke="#031f1e" stroke-width="0.8" stroke-linejoin="round" />
<path d="M1040.0 476.0 L1058.3 455.7 L1114.8 455.7 L1122.0 461.0 L1060.0 560.0 L1000.0 580.0 L985.0 560.0 Z" fill="#141515" />
<path d="M1053.0 480.0 L1002.0 560.0" fill="none" stroke="#050505" stroke-width="3.4" stroke-linecap="round" stroke-linejoin="round" />
<path d="M1054.2 480.8 L1003.2 560.8" fill="none" stroke="#555" stroke-width="0.9" stroke-linecap="round" stroke-linejoin="round" />
<path d="M1081.0 482.0 L1032.0 560.0" fill="none" stroke="#050505" stroke-width="3.4" stroke-linecap="round" stroke-linejoin="round" />
<path d="M1082.2 482.8 L1033.2 560.8" fill="none" stroke="#555" stroke-width="0.9" stroke-linecap="round" stroke-linejoin="round" />
<path d="M1109.0 478.0 L1050.0 575.0" fill="none" stroke="#050505" stroke-width="3.4" stroke-linecap="round" stroke-linejoin="round" />
<path d="M1110.2 478.8 L1051.2 575.8" fill="none" stroke="#555" stroke-width="0.9" stroke-linecap="round" stroke-linejoin="round" />
<ellipse cx="1058.0" cy="468.0" rx="11.5" ry="7.5" fill="#080808" transform="rotate(-20.0 1058.0 468.0)" />
<path d="M1044.3 479.5 L1044.6 477.8 L1045.2 476.7 L1048.2 471.7 L1048.6 471.2 L1049.0 470.7 L1049.5 470.1 L1050.6 469.2 L1051.8 468.4 L1052.5 468.0 L1053.9 467.4 L1054.7 467.1 L1055.4 466.9 L1057.0 466.6 L1059.2 466.6 L1059.9 466.7 L1060.5 466.8 L1061.2 467.0 L1061.8 467.2 L1062.8 467.8 L1063.2 468.2 L1064.0 469.0 L1064.5 469.9 L1064.7 470.9 L1064.7 471.5 L1064.4 473.2 L1063.8 474.3 L1060.8 479.3 L1060.4 479.8 L1060.0 480.3 L1059.5 480.9 L1058.4 481.8 L1057.2 482.6 L1056.5 483.0 L1055.1 483.6 L1054.3 483.9 L1053.6 484.1 L1052.0 484.4 L1049.8 484.4 L1049.1 484.3 L1048.5 484.2 L1047.8 484.0 L1047.2 483.8 L1046.2 483.2 L1045.8 482.8 L1045.0 482.0 L1044.5 481.1 L1044.3 480.1 Z" fill="#14706b" stroke="#031f1e" stroke-width="0.8" stroke-linejoin="round" />
<ellipse cx="1086.0" cy="470.0" rx="11.5" ry="7.5" fill="#080808" transform="rotate(-20.0 1086.0 470.0)" />
<path d="M1072.3 481.5 L1072.6 479.8 L1073.2 478.7 L1076.2 473.7 L1076.6 473.2 L1077.0 472.7 L1077.5 472.1 L1078.6 471.2 L1079.8 470.4 L1080.5 470.0 L1081.9 469.4 L1082.7 469.1 L1083.4 468.9 L1085.0 468.6 L1087.2 468.6 L1087.9 468.7 L1088.5 468.8 L1089.2 469.0 L1089.8 469.2 L1090.8 469.8 L1091.2 470.2 L1092.0 471.0 L1092.5 471.9 L1092.7 472.9 L1092.7 473.5 L1092.4 475.2 L1091.8 476.3 L1088.8 481.3 L1088.4 481.8 L1088.0 482.3 L1087.5 482.9 L1086.4 483.8 L1085.2 484.6 L1084.5 485.0 L1083.1 485.6 L1082.3 485.9 L1081.6 486.1 L1080.0 486.4 L1077.8 486.4 L1077.1 486.3 L1076.5 486.2 L1075.8 486.0 L1075.2 485.8 L1074.2 485.2 L1073.8 484.8 L1073.0 484.0 L1072.5 483.1 L1072.3 482.1 Z" fill="#14706b" stroke="#031f1e" stroke-width="0.8" stroke-linejoin="round" />
<ellipse cx="1114.0" cy="464.0" rx="11.5" ry="7.5" fill="#080808" transform="rotate(-20.0 1114.0 464.0)" />
<path d="M1100.3 475.5 L1100.6 473.8 L1101.2 472.7 L1104.2 467.7 L1104.6 467.2 L1105.0 466.7 L1105.5 466.1 L1106.6 465.2 L1107.8 464.4 L1108.5 464.0 L1109.9 463.4 L1110.7 463.1 L1111.4 462.9 L1113.0 462.6 L1115.2 462.6 L1115.9 462.7 L1116.5 462.8 L1117.2 463.0 L1117.8 463.2 L1118.8 463.8 L1119.2 464.2 L1120.0 465.0 L1120.5 465.9 L1120.7 466.9 L1120.7 467.5 L1120.4 469.2 L1119.8 470.3 L1116.8 475.3 L1116.4 475.8 L1116.0 476.3 L1115.5 476.9 L1114.4 477.8 L1113.2 478.6 L1112.5 479.0 L1111.1 479.6 L1110.3 479.9 L1109.6 480.1 L1108.0 480.4 L1105.8 480.4 L1105.1 480.3 L1104.5 480.2 L1103.8 480.0 L1103.2 479.8 L1102.2 479.2 L1101.8 478.8 L1101.0 478.0 L1100.5 477.1 L1100.3 476.1 Z" fill="#262a2a" stroke="#031f1e" stroke-width="0.8" stroke-linejoin="round" />
<path d="M1122.0 444.0 L1163.2 448.0 L1168.5 452.0 L1209.7 583.5 L1212.4 615.4 L1187.0 642.0 L1174.0 613.0 L1160.5 565.0 L1155.0 528.0 L1139.0 501.0 L1150.0 466.6 L1112.7 460.0 Z" fill="#393a3b" stroke="#0d0d0d" stroke-width="1" stroke-linejoin="round" />
<path d="M1163.2 448.0 L1168.5 452.0 L1209.7 583.5 L1212.4 615.4" fill="none" stroke="#0d0d0d" stroke-width="3" stroke-linecap="round" stroke-linejoin="round" />
<path d="M1122.0 444.0 L1163.2 448.0" fill="none" stroke="#0d0d0d" stroke-width="2.4" stroke-linecap="round" stroke-linejoin="round" />
<path d="M1165.0 585.0 L1209.7 596.0" fill="none" stroke="#151515" stroke-width="1" stroke-linecap="round" stroke-linejoin="round" />
<path d="M1060.0 585.0 L1100.0 560.0 L1140.0 575.0 L1150.0 640.0 L1110.0 700.0 L1075.0 690.0 L1050.0 640.0 Z" fill="#49524f" stroke="#111" stroke-width="1" stroke-linejoin="round" />
<path d="M1075.0 600.0 L1112.0 590.0 L1120.0 640.0 L1090.0 660.0 Z" fill="#596461" />
<ellipse cx="1108.0" cy="556.0" rx="28.0" ry="22.0" fill="#3d3f3c" transform="rotate(-30.0 1108.0 556.0)" stroke="#111" stroke-width="1" />
<ellipse cx="1112.0" cy="559.0" rx="18.0" ry="13.0" fill="#6b6a58" transform="rotate(-30.0 1112.0 559.0)" stroke="#111" stroke-width="1" />
<path d="M1035.9 631.3 L1036.3 629.2 L1036.7 628.2 L1037.2 627.1 L1037.8 626.0 L1038.5 625.0 L1040.3 623.0 L1041.3 622.0 L1043.5 620.2 L1044.7 619.4 L1046.0 618.7 L1047.4 618.0 L1048.7 617.4 L1050.1 616.9 L1051.5 616.5 L1054.3 615.9 L1057.0 615.7 L1058.3 615.7 L1059.6 615.9 L1060.8 616.1 L1062.0 616.4 L1063.0 616.8 L1064.0 617.3 L1064.9 617.8 L1065.7 618.5 L1066.4 619.2 L1067.4 620.8 L1067.8 621.7 L1068.0 622.7 L1076.0 662.7 L1076.1 663.6 L1076.1 664.7 L1075.7 666.8 L1075.3 667.8 L1074.8 668.9 L1074.2 670.0 L1073.5 671.0 L1071.7 673.0 L1070.7 674.0 L1068.5 675.8 L1067.3 676.6 L1066.0 677.3 L1064.6 678.0 L1063.3 678.6 L1061.9 679.1 L1060.5 679.5 L1057.7 680.1 L1055.0 680.3 L1053.7 680.3 L1052.4 680.1 L1051.2 679.9 L1050.0 679.6 L1049.0 679.2 L1048.0 678.7 L1047.1 678.2 L1046.3 677.5 L1045.6 676.8 L1044.6 675.2 L1044.2 674.3 L1044.0 673.3 L1036.0 633.3 L1035.9 632.4 Z" fill="#2b2d2d" stroke="#0a0a0a" stroke-width="1" stroke-linejoin="round" />
<path d="M1099.2 674.4 L1099.3 673.5 L1099.5 672.6 L1099.8 671.7 L1100.3 670.8 L1100.9 669.9 L1102.6 668.2 L1103.5 667.4 L1104.6 666.6 L1105.8 665.8 L1107.1 665.1 L1108.5 664.5 L1111.5 663.3 L1113.0 662.9 L1114.6 662.5 L1117.9 661.9 L1119.5 661.7 L1121.2 661.6 L1122.8 661.6 L1125.9 661.8 L1127.3 662.0 L1128.7 662.3 L1130.0 662.7 L1131.2 663.1 L1132.3 663.6 L1133.3 664.2 L1134.2 664.8 L1135.0 665.5 L1135.6 666.3 L1136.1 667.0 L1136.5 667.9 L1136.7 668.7 L1136.8 669.6 L1138.8 697.6 L1138.7 698.5 L1138.5 699.4 L1138.2 700.3 L1137.7 701.2 L1137.1 702.1 L1135.4 703.8 L1134.5 704.6 L1133.4 705.4 L1132.2 706.2 L1130.9 706.9 L1129.5 707.5 L1126.5 708.7 L1125.0 709.1 L1123.4 709.5 L1120.1 710.1 L1118.5 710.3 L1116.8 710.4 L1115.2 710.4 L1112.1 710.2 L1110.7 710.0 L1109.3 709.7 L1108.0 709.3 L1106.8 708.9 L1105.7 708.4 L1104.7 707.8 L1103.8 707.2 L1103.0 706.5 L1102.4 705.7 L1101.9 705.0 L1101.5 704.1 L1101.3 703.3 L1101.2 702.4 Z" fill="#3a3d3d" stroke="#0a0a0a" stroke-width="1" stroke-linejoin="round" />
<g transform="translate(1139,598) rotate(17)"><path d="M0 -72 L7 -54 L-5 -52 Z" fill="#efefef" stroke="#111" stroke-width="0.9"/><ellipse cx="0" cy="0" rx="24.5" ry="47" fill="#e9e9e9" stroke="#111" stroke-width="1.1"/><path d="M-6 -34 H8 V-24 H-6 Z M-7 -18 H6 L2 14 H-10 Z" fill="#5d6a67" stroke="#111" stroke-width="0.9"/><path d="M-18 10 L-2 18 L-2 42 L-14 40 Z" fill="#3a3f3f" stroke="#111" stroke-width="0.9"/><circle cx="13" cy="20" r="10.5" fill="#2c2c2c"/><circle cx="13" cy="20" r="5" fill="#cfcfcf" stroke="#111" stroke-width="1"/><path d="M-22 48 L-30 82 L-12 58 Z" fill="#ededed" stroke="#111" stroke-width="0.9"/><path d="M-10 46 L26 34 L28 40 L-8 54 Z" fill="#53605d" stroke="#111" stroke-width="0.9"/></g>
<path d="M597.4 505.0 L605.0 487.0 L635.0 476.0 L645.0 480.0 L640.0 520.0 L618.0 585.0 L592.0 592.0 Z" fill="#2c2d2e" stroke="#0d0d0d" stroke-width="1" stroke-linejoin="round" />
<path d="M599.0 520.0 L612.0 512.0 L622.0 560.0 L606.0 585.0 L594.0 588.0 Z" fill="#414243" />
<ellipse cx="656.0" cy="463.0" rx="21.0" ry="13.0" fill="#121212" transform="rotate(-35.0 656.0 463.0)" />
<ellipse cx="656.0" cy="463.0" rx="14.0" ry="8.0" fill="#1d1d1d" transform="rotate(-35.0 656.0 463.0)" stroke="#333" stroke-width="1" />
<ellipse cx="612.0" cy="500.0" rx="11.0" ry="17.0" fill="#111" transform="rotate(15.0 612.0 500.0)" />
<ellipse cx="616.0" cy="503.0" rx="6.0" ry="12.0" fill="#17807a" transform="rotate(15.0 616.0 503.0)" />
<path d="M683.0 468.0 L696.0 467.0 L700.4 478.0 L694.0 489.0 L684.0 484.0 Z" fill="#1c938c" stroke="#05302e" stroke-width="0.8" stroke-linejoin="round" />
<path d="M582.6 591.9 L600.8 580.6 L616.6 586.0 L616.6 597.5 L594.0 600.0 Z" fill="#0b0b0b" />
<ellipse cx="603.0" cy="640.0" rx="14.0" ry="44.0" fill="#202222" transform="rotate(12.0 603.0 640.0)" stroke="#0a0a0a" stroke-width="1" />
<ellipse cx="608.0" cy="642.0" rx="8.0" ry="34.0" fill="#17807a" transform="rotate(12.0 608.0 642.0)" />
<ellipse cx="612.0" cy="643.0" rx="7.0" ry="32.0" fill="#151515" transform="rotate(12.0 612.0 643.0)" />
<path d="M660.0 556.0 L667.0 552.0 L668.0 575.0 L661.0 580.0 Z" fill="#e9e9e9" />
<g transform="translate(640,631) rotate(15.5)">
<rect x="0" y="0" width="165" height="47" rx="6" fill="url(#dcyl)" stroke="#0a0a0a" stroke-width="1"/>
<rect x="165" y="14" width="130" height="20" fill="#2a2e2e" stroke="#0a0a0a" stroke-width="1"/>
<ellipse cx="165" cy="24" rx="6" ry="15" fill="#3a3f3f" stroke="#0a0a0a" stroke-width="1"/>
<path d="M22 0 V47" stroke="#0a0a0a" stroke-width="1" fill="none"/>
</g>
<path d="M748.0 690.0 L795.0 702.0 L795.0 748.0 L748.0 740.0 Z" fill="url(#perf)" stroke="#0a0a0a" stroke-width="0.8" stroke-linejoin="round" />
<path d="M742.0 748.0 L826.0 700.0 L836.0 710.0 L750.0 764.0 Z" fill="url(#perf)" stroke="#0a0a0a" stroke-width="0.8" stroke-linejoin="round" />
<path d="M836.0 710.0 L925.0 700.0 L935.0 775.0 L880.0 790.0 L800.0 770.0 L770.0 755.0 Z" fill="#2a2a2a" stroke="#0a0a0a" stroke-width="0.8" stroke-linejoin="round" />
<path d="M866.0 700.0 L878.0 703.0 L878.0 772.0 L866.0 768.0 Z" fill="url(#perf)" />
<path d="M800.0 690.0 L935.0 725.0 L935.0 740.0 L800.0 705.0 Z" fill="#2d3131" stroke="#0a0a0a" stroke-width="0.8" stroke-linejoin="round" />
<path d="M597.0 674.3 L606.0 678.0 L612.0 700.0 L603.0 706.0 Z" fill="#b9b5aa" stroke="#222" stroke-width="0.8" stroke-linejoin="round" />
<path d="M605.9 704.5 L606.0 703.5 L606.4 702.6 L607.0 701.8 L607.9 701.1 L609.0 700.4 L610.3 699.8 L611.9 699.3 L613.7 698.9 L615.7 698.7 L617.9 698.5 L620.2 698.4 L622.7 698.4 L625.3 698.5 L628.1 698.7 L633.8 699.5 L636.7 700.0 L639.7 700.6 L642.7 701.3 L645.6 702.1 L651.4 703.9 L654.1 704.9 L656.8 705.9 L659.3 707.0 L661.7 708.1 L663.9 709.3 L665.9 710.4 L667.7 711.6 L669.3 712.8 L670.7 714.0 L671.9 715.2 L672.8 716.3 L673.5 717.4 L673.9 718.5 L674.1 719.5 L674.1 729.5 L674.0 730.5 L673.6 731.4 L673.0 732.2 L672.1 732.9 L671.0 733.6 L669.7 734.2 L668.1 734.7 L666.3 735.1 L664.3 735.3 L662.1 735.5 L659.8 735.6 L657.3 735.6 L654.7 735.5 L651.9 735.3 L646.2 734.5 L643.3 734.0 L640.3 733.4 L637.3 732.7 L634.4 731.9 L628.6 730.1 L625.9 729.1 L623.2 728.1 L620.7 727.0 L618.3 725.9 L616.1 724.7 L614.1 723.6 L612.3 722.4 L610.7 721.2 L609.3 720.0 L608.1 718.8 L607.2 717.7 L606.5 716.6 L606.1 715.5 L605.9 714.5 Z" fill="#cfcfcf" stroke="#222" stroke-width="0.8" stroke-linejoin="round" />
<path d="M612.9 686.0 L618.0 676.0 L627.0 671.6 L682.0 677.0 L686.0 716.8 L666.0 714.0 L628.8 703.5 L614.0 695.0 Z" fill="#1fa39b" stroke="#05302e" stroke-width="1" stroke-linejoin="round" />
<path d="M613.0 692.0 L628.8 707.0 L666.0 717.5 L686.0 720.0" fill="none" stroke="#0c5a56" stroke-width="2" stroke-linecap="round" stroke-linejoin="round" />
<path d="M682.0 677.0 L700.0 680.0 L722.0 700.0 L724.0 718.0 L700.0 724.0 L686.0 716.8 Z" fill="#2f3333" stroke="#0a0a0a" stroke-width="1" stroke-linejoin="round" />
<path d="M683.3 724.4 L683.5 723.7 L683.9 723.0 L684.4 722.4 L685.0 721.9 L685.8 721.4 L686.8 720.9 L687.9 720.5 L689.1 720.1 L691.8 719.6 L693.3 719.5 L696.5 719.3 L698.2 719.3 L700.0 719.4 L703.6 719.8 L705.4 720.1 L707.2 720.5 L709.0 720.9 L710.7 721.3 L712.4 721.8 L714.0 722.4 L717.0 723.6 L718.4 724.3 L719.6 725.0 L720.7 725.7 L722.6 727.2 L723.3 728.0 L723.9 728.7 L724.3 729.5 L724.6 730.2 L724.7 730.9 L724.7 748.6 L724.5 749.3 L724.1 750.0 L723.6 750.6 L723.0 751.1 L722.2 751.6 L721.2 752.1 L720.1 752.5 L718.9 752.9 L716.2 753.4 L714.7 753.5 L711.5 753.7 L709.8 753.7 L708.0 753.6 L704.4 753.2 L702.6 752.9 L700.8 752.5 L699.0 752.1 L697.3 751.7 L695.6 751.2 L694.0 750.6 L691.0 749.4 L689.6 748.7 L688.4 748.0 L687.3 747.3 L685.4 745.8 L684.7 745.0 L684.1 744.3 L683.7 743.5 L683.4 742.8 L683.3 742.1 Z" fill="#2a2d2d" stroke="#0a0a0a" stroke-width="0.8" stroke-linejoin="round" />
<ellipse cx="700.0" cy="712.0" rx="2.5" ry="2.0" fill="#0a0a0a" />
<path d="M627.5 678.0 L629.0 690.0 L646.0 695.0 L660.0 690.0 L660.7 679.0 L645.0 673.0 Z" fill="#9d9d9d" stroke="#222" stroke-width="0.8" stroke-linejoin="round" />
<path d="M627.5 678.0 L633.0 673.5 L648.0 673.0 L660.7 679.0 L650.0 683.0 L634.0 682.0 Z" fill="#cdcdcd" stroke="#222" stroke-width="0.6" stroke-linejoin="round" />
<path d="M874.2 781.0 L874.4 779.1 L875.0 777.3 L876.1 775.6 L877.6 774.0 L879.6 772.5 L882.0 771.2 L884.8 770.1 L887.9 769.1 L891.5 768.3 L895.4 767.7 L899.5 767.2 L904.0 767.0 L908.6 766.9 L913.5 767.0 L918.6 767.4 L923.7 767.9 L929.0 768.6 L934.3 769.4 L939.6 770.5 L944.8 771.7 L950.0 773.0 L955.1 774.6 L960.0 776.2 L964.8 777.9 L969.3 779.8 L973.5 781.8 L977.5 783.8 L981.1 785.9 L984.4 788.0 L987.3 790.2 L989.8 792.4 L991.9 794.6 L993.6 796.8 L994.8 798.9 L995.5 801.0 L995.8 803.0 L995.8 816.0 L995.6 817.9 L995.0 819.7 L993.9 821.4 L992.4 823.0 L990.4 824.5 L988.0 825.8 L985.2 826.9 L982.1 827.9 L978.5 828.7 L974.6 829.3 L970.5 829.8 L966.0 830.0 L961.4 830.1 L956.5 830.0 L951.4 829.6 L946.3 829.1 L941.0 828.4 L935.7 827.6 L930.4 826.5 L925.2 825.3 L920.0 824.0 L914.9 822.4 L910.0 820.8 L905.2 819.1 L900.7 817.2 L896.5 815.2 L892.5 813.2 L888.9 811.1 L885.6 809.0 L882.7 806.8 L880.2 804.6 L878.1 802.4 L876.4 800.2 L875.2 798.1 L874.5 796.0 L874.2 794.0 Z" fill="#d2d2d2" stroke="#222" stroke-width="0.8" stroke-linejoin="round" />
<path d="M874.3 766.0 L879.6 755.4 L886.0 748.0 L954.0 743.4 L972.7 762.0 L993.0 786.0 L984.0 795.0 L946.0 796.0 L900.0 784.0 L874.3 774.0 Z" fill="#1fa39b" stroke="#05302e" stroke-width="1" stroke-linejoin="round" />
<path d="M943.4 768.0 L950.0 762.0 L970.0 764.0 L976.0 772.0 L975.0 786.0 L960.0 790.0 L944.0 782.0 Z" fill="#a4a4a4" stroke="#222" stroke-width="0.8" stroke-linejoin="round" />
<path d="M943.4 768.0 L950.0 762.0 L970.0 764.0 L976.0 772.0 L960.0 776.0 Z" fill="#cdcdcd" stroke="#222" stroke-width="0.6" stroke-linejoin="round" />
<ellipse cx="893.0" cy="757.0" rx="4.2" ry="4.2" fill="#f4f4f4" stroke="#111" stroke-width="1.6" />
<path d="M885.0 745.0 L898.0 742.0 L906.0 746.0 L890.0 752.0 Z" fill="#17807a" stroke="#05302e" stroke-width="0.7" stroke-linejoin="round" />
<path d="M935.0 705.0 L975.0 712.0 L975.0 745.0 L935.0 740.0 Z" fill="#c8c8c8" stroke="#222" stroke-width="0.8" stroke-linejoin="round" />
<path d="M935.0 722.0 L975.0 728.0 L975.0 745.0 L935.0 740.0 Z" fill="#e9e9e9" />
<path d="M1058.0 676.0 L1073.0 676.0 L1076.0 688.0 L1062.0 690.0 Z" fill="#ffffff" />
<path d="M1078.0 680.0 L1090.0 684.0 L1090.0 701.0 L1080.0 699.0 Z" fill="#ffffff" />
<path d="M1035.0 672.0 L1062.0 664.0 L1071.0 670.0 L1052.0 688.0 L1036.0 686.0 Z" fill="#1c938c" stroke="#05302e" stroke-width="0.8" stroke-linejoin="round" />
<ellipse cx="988.0" cy="749.0" rx="12.0" ry="38.0" fill="#1d1d1d" transform="rotate(14.0 988.0 749.0)" stroke="#050505" stroke-width="1" />
<ellipse cx="990.0" cy="749.0" rx="8.0" ry="32.0" fill="#2c2c2c" transform="rotate(14.0 990.0 749.0)" />
<path d="M993.0 754.5 L999.4 730.9 L1030.9 697.8 L1070.2 690.0 L1078.0 699.4 L1079.7 734.0 L1054.5 757.6 L1022.0 782.0 L1010.0 800.0 L1004.0 800.0 L997.0 775.0 Z" fill="#d6d6d6" stroke="#111" stroke-width="1.1" stroke-linejoin="round" />
<ellipse cx="1048.0" cy="729.0" rx="8.5" ry="10.5" fill="#262626" transform="rotate(20.0 1048.0 729.0)" stroke="#111" stroke-width="0.7" />
<ellipse cx="1067.0" cy="712.0" rx="6.0" ry="9.0" fill="#262626" transform="rotate(15.0 1067.0 712.0)" stroke="#111" stroke-width="0.7" />
<ellipse cx="1035.0" cy="708.0" rx="5.5" ry="8.0" fill="#262626" transform="rotate(20.0 1035.0 708.0)" stroke="#111" stroke-width="0.7" />
<ellipse cx="1022.0" cy="726.0" rx="5.0" ry="6.0" fill="#262626" transform="rotate(20.0 1022.0 726.0)" stroke="#111" stroke-width="0.7" />
<ellipse cx="1030.0" cy="745.0" rx="6.5" ry="5.0" fill="#262626" transform="rotate(-30.0 1030.0 745.0)" stroke="#111" stroke-width="0.7" />
<ellipse cx="1046.0" cy="752.0" rx="7.0" ry="4.0" fill="#262626" transform="rotate(-35.0 1046.0 752.0)" stroke="#111" stroke-width="0.7" />
<ellipse cx="1060.0" cy="738.0" rx="3.0" ry="4.0" fill="#262626" stroke="#111" stroke-width="0.7" />
<ellipse cx="1015.0" cy="770.0" rx="5.0" ry="9.0" fill="#262626" transform="rotate(25.0 1015.0 770.0)" stroke="#111" stroke-width="0.7" />
<ellipse cx="1071.0" cy="728.0" rx="2.5" ry="3.5" fill="#262626" stroke="#111" stroke-width="0.7" />
<path d="M1038.0 706.0 L1056.0 701.0 L1057.0 712.0 L1040.0 716.0 Z" fill="#2f7f78" stroke="#111" stroke-width="0.7" stroke-linejoin="round" />
<path d="M1016.0 750.0 L1055.0 756.0" fill="none" stroke="#8a8a8a" stroke-width="1.2" stroke-linecap="round" stroke-linejoin="round" />
<path d="M1016.0 750.0 L1034.0 712.0" fill="none" stroke="#8a8a8a" stroke-width="1.2" stroke-linecap="round" stroke-linejoin="round" />
<path d="M1016.0 762.0 L1028.0 788.0" fill="none" stroke="#8a8a8a" stroke-width="1.2" stroke-linecap="round" stroke-linejoin="round" />
<ellipse cx="1007.2" cy="749.8" rx="7.0" ry="8.5" fill="#b9b9b9" transform="rotate(15.0 1007.2 749.8)" stroke="#111" stroke-width="1.1" />
<ellipse cx="1007.8" cy="750.0" rx="2.6" ry="3.2" fill="#3a3a3a" transform="rotate(15.0 1007.8 750.0)" />
<path d="M1078.0 690.0 L1086.0 702.0 L1102.0 707.0 L1103.0 713.0 L1081.0 733.0 L1079.7 734.0 L1078.0 699.4 Z" fill="#f0f0f0" stroke="#444" stroke-width="0.8" stroke-linejoin="round" />
<ellipse cx="1007.0" cy="683.6" rx="6.5" ry="8.0" fill="#b5b5b5" transform="rotate(15.0 1007.0 683.6)" stroke="#111" stroke-width="1" />
<ellipse cx="1007.5" cy="684.0" rx="2.2" ry="2.8" fill="#333" transform="rotate(15.0 1007.5 684.0)" />
<ellipse cx="1026.0" cy="591.0" rx="13.0" ry="20.0" fill="#141414" transform="rotate(20.0 1026.0 591.0)" stroke="#2a2a2a" stroke-width="2" />
<ellipse cx="1030.0" cy="591.0" rx="5.0" ry="6.5" fill="#d8d8d8" transform="rotate(20.0 1030.0 591.0)" stroke="#111" stroke-width="1" />
<ellipse cx="1004.0" cy="592.0" rx="16.0" ry="30.0" fill="none" transform="rotate(14.0 1004.0 592.0)" stroke="#1a1a1a" stroke-width="4" />
<path d="M1000.0 575.0 L982.0 735.0" fill="none" stroke="#151515" stroke-width="3.4" stroke-linecap="round" stroke-linejoin="round" />
<path d="M1016.0 612.0 L1006.0 720.0" fill="none" stroke="#151515" stroke-width="3" stroke-linecap="round" stroke-linejoin="round" />
<g transform="translate(626,577.5) rotate(15.1)">
<rect x="2" y="-6" width="318" height="8" fill="#9a9a9a" stroke="#111" stroke-width="0.8"/>
<rect x="0" y="0" width="318" height="26" rx="3" fill="url(#roll)" stroke="#0a0a0a" stroke-width="1"/>
<path d="M8.0 0 V26 M24.2 0 V26 M40.4 0 V26 M56.6 0 V26 M72.8 0 V26 M89.0 0 V26 M105.2 0 V26 M121.4 0 V26 M137.6 0 V26 M153.8 0 V26 M170.0 0 V26 M186.2 0 V26 M202.4 0 V26 M218.6 0 V26 M234.8 0 V26 M251.0 0 V26 M267.2 0 V26 M283.4 0 V26 M299.6 0 V26 M315.8 0 V26  M0 13 H318" stroke="#0a0a0a" stroke-width="1.2" fill="none"/>
</g>
<path d="M770.0 575.0 L800.0 585.0 L790.0 600.0 L762.0 590.0 Z" fill="#1c938c" />
<path d="M835.0 600.0 L870.0 610.0 L862.0 628.0 L828.0 616.0 Z" fill="#1fa39b" />
<path d="M880.0 612.0 L925.0 630.0 L940.0 655.0 L930.0 665.0 L870.0 640.0 Z" fill="#1fa39b" stroke="#05302e" stroke-width="0.8" stroke-linejoin="round" />
<path d="M616.9 527.9 L617.0 524.9 L617.2 521.7 L617.5 518.6 L618.0 515.4 L618.6 512.1 L619.3 508.9 L620.2 505.7 L621.2 502.5 L622.2 499.5 L623.4 496.5 L624.7 493.7 L626.1 491.0 L627.6 488.5 L629.1 486.1 L630.6 484.0 L632.2 482.1 L633.9 480.4 L635.5 479.0 L637.2 477.8 L638.8 476.9 L640.4 476.3 L642.0 476.0 L643.5 475.9 L645.0 476.1 L663.5 481.1 L664.9 481.6 L666.2 482.4 L667.4 483.4 L668.6 484.8 L669.6 486.3 L670.5 488.1 L671.3 490.2 L671.9 492.4 L672.5 494.8 L673.1 500.2 L673.2 503.1 L673.1 506.1 L672.9 509.3 L672.6 512.4 L672.1 515.6 L671.5 518.9 L670.8 522.1 L669.9 525.3 L668.9 528.5 L667.9 531.5 L666.7 534.5 L665.4 537.3 L664.0 540.0 L662.5 542.5 L661.0 544.9 L659.5 547.0 L657.9 548.9 L656.2 550.6 L654.6 552.0 L652.9 553.2 L651.3 554.1 L649.7 554.7 L648.1 555.0 L646.6 555.1 L645.1 554.9 L626.6 549.9 L625.2 549.4 L623.9 548.6 L622.7 547.6 L621.5 546.2 L620.5 544.7 L619.6 542.9 L618.8 540.8 L618.2 538.6 L617.6 536.2 L617.3 533.5 L617.0 530.8 Z" fill="url(#tread)" stroke="#3a3a3a" stroke-width="0.9" stroke-linejoin="round" />
<ellipse cx="654.3" cy="518.0" rx="17.0" ry="38.0" fill="#c9c9c9" transform="rotate(14.0 654.3 518.0)" stroke="#222" stroke-width="0.9" />
<ellipse cx="654.9" cy="518.0" rx="14.8" ry="35.0" fill="url(#spk)" transform="rotate(14.0 654.9 518.0)" stroke="#111" stroke-width="0.8" />
<ellipse cx="655.1" cy="518.0" rx="4.0" ry="9.0" fill="#3a3a3a" transform="rotate(14.0 655.1 518.0)" stroke="#bdbdbd" stroke-width="1" />
<path d="M650.8 537.5 L650.9 534.5 L651.1 531.4 L651.4 528.2 L651.9 525.0 L652.5 521.8 L653.2 518.5 L654.1 515.3 L656.1 509.1 L657.3 506.2 L658.6 503.3 L660.0 500.6 L661.5 498.1 L663.0 495.8 L664.5 493.7 L666.1 491.8 L667.8 490.1 L669.4 488.7 L671.1 487.5 L672.7 486.6 L674.3 486.0 L675.9 485.6 L677.4 485.6 L678.9 485.8 L697.4 490.8 L698.8 491.3 L700.1 492.0 L701.3 493.1 L702.5 494.4 L703.5 496.0 L704.4 497.8 L705.2 499.8 L705.8 502.0 L706.4 504.5 L706.7 507.1 L707.0 509.9 L707.1 512.8 L707.0 515.8 L706.8 518.9 L706.5 522.1 L706.0 525.3 L705.4 528.5 L704.7 531.8 L703.8 535.0 L701.8 541.2 L700.6 544.1 L699.3 546.9 L697.9 549.6 L696.4 552.2 L694.9 554.5 L693.4 556.6 L691.8 558.5 L690.1 560.2 L688.5 561.6 L686.8 562.8 L685.2 563.7 L683.6 564.3 L682.0 564.7 L680.5 564.7 L679.0 564.5 L660.5 559.5 L659.1 559.0 L657.8 558.2 L656.6 557.2 L655.4 555.9 L654.4 554.3 L653.5 552.5 L652.7 550.5 L652.1 548.2 L651.5 545.8 L651.2 543.2 L650.9 540.4 Z" fill="url(#tread)" stroke="#3a3a3a" stroke-width="0.9" stroke-linejoin="round" />
<ellipse cx="688.2" cy="527.6" rx="17.0" ry="38.0" fill="#c9c9c9" transform="rotate(14.0 688.2 527.6)" stroke="#222" stroke-width="0.9" />
<ellipse cx="688.8" cy="527.6" rx="14.8" ry="35.0" fill="url(#spk)" transform="rotate(14.0 688.8 527.6)" stroke="#111" stroke-width="0.8" />
<ellipse cx="689.0" cy="527.6" rx="4.0" ry="9.0" fill="#3a3a3a" transform="rotate(14.0 689.0 527.6)" stroke="#bdbdbd" stroke-width="1" />
<path d="M684.7 547.2 L684.8 544.1 L685.0 541.0 L685.3 537.9 L685.8 534.6 L686.4 531.4 L687.1 528.2 L688.0 525.0 L689.0 521.8 L690.0 518.8 L691.2 515.8 L692.5 513.0 L693.9 510.3 L695.4 507.8 L696.9 505.4 L698.4 503.3 L700.0 501.4 L701.7 499.7 L703.3 498.3 L705.0 497.1 L706.6 496.2 L708.2 495.6 L709.8 495.3 L711.3 495.2 L712.8 495.4 L731.3 500.4 L732.7 500.9 L734.0 501.7 L735.2 502.7 L736.4 504.0 L737.4 505.6 L738.3 507.4 L739.1 509.4 L739.7 511.7 L740.3 514.1 L740.6 516.7 L740.9 519.5 L741.0 522.4 L740.9 525.4 L740.7 528.5 L740.4 531.7 L739.9 534.9 L739.3 538.2 L738.6 541.4 L737.7 544.6 L736.7 547.7 L735.7 550.8 L734.5 553.8 L733.2 556.6 L731.8 559.3 L730.3 561.8 L728.8 564.1 L727.3 566.3 L725.7 568.2 L724.0 569.8 L722.4 571.3 L720.7 572.4 L719.1 573.3 L717.5 574.0 L715.9 574.3 L714.4 574.4 L712.9 574.2 L694.4 569.2 L693.0 568.7 L691.7 567.9 L690.5 566.8 L689.3 565.5 L688.3 564.0 L687.4 562.2 L686.6 560.1 L686.0 557.9 L685.4 555.4 L685.1 552.8 L684.8 550.1 Z" fill="url(#tread)" stroke="#3a3a3a" stroke-width="0.9" stroke-linejoin="round" />
<ellipse cx="722.1" cy="537.3" rx="17.0" ry="38.0" fill="#c9c9c9" transform="rotate(14.0 722.1 537.3)" stroke="#222" stroke-width="0.9" />
<ellipse cx="722.7" cy="537.3" rx="14.8" ry="35.0" fill="url(#spk)" transform="rotate(14.0 722.7 537.3)" stroke="#111" stroke-width="0.8" />
<ellipse cx="722.9" cy="537.3" rx="4.0" ry="9.0" fill="#3a3a3a" transform="rotate(14.0 722.9 537.3)" stroke="#bdbdbd" stroke-width="1" />
<path d="M718.6 556.8 L718.7 553.8 L718.9 550.7 L719.2 547.5 L719.7 544.3 L720.3 541.0 L721.0 537.8 L721.9 534.6 L723.9 528.4 L725.1 525.4 L726.4 522.6 L727.8 519.9 L729.3 517.4 L730.8 515.1 L732.3 512.9 L733.9 511.0 L735.6 509.4 L737.2 507.9 L738.9 506.8 L740.5 505.9 L742.1 505.2 L743.7 504.9 L745.2 504.8 L746.7 505.0 L765.2 510.0 L766.6 510.5 L767.9 511.3 L769.1 512.4 L770.3 513.7 L771.3 515.2 L772.2 517.0 L773.0 519.1 L773.6 521.3 L774.2 523.8 L774.5 526.4 L774.8 529.1 L774.9 532.0 L774.8 535.1 L774.6 538.2 L774.3 541.3 L773.8 544.6 L773.2 547.8 L772.5 551.0 L771.6 554.2 L770.6 557.4 L769.6 560.4 L768.4 563.4 L767.1 566.2 L765.7 568.9 L764.2 571.4 L762.7 573.8 L761.2 575.9 L759.6 577.8 L757.9 579.5 L756.3 580.9 L754.6 582.1 L753.0 583.0 L751.4 583.6 L749.8 583.9 L748.3 584.0 L746.8 583.8 L728.3 578.8 L726.9 578.3 L725.6 577.5 L724.4 576.5 L723.2 575.2 L722.2 573.6 L721.3 571.8 L720.5 569.8 L719.9 567.5 L719.3 565.1 L719.0 562.5 L718.7 559.7 Z" fill="url(#tread)" stroke="#3a3a3a" stroke-width="0.9" stroke-linejoin="round" />
<ellipse cx="756.0" cy="546.9" rx="17.0" ry="38.0" fill="#c9c9c9" transform="rotate(14.0 756.0 546.9)" stroke="#222" stroke-width="0.9" />
<ellipse cx="756.6" cy="546.9" rx="14.8" ry="35.0" fill="url(#spk)" transform="rotate(14.0 756.6 546.9)" stroke="#111" stroke-width="0.8" />
<ellipse cx="756.8" cy="546.9" rx="4.0" ry="9.0" fill="#3a3a3a" transform="rotate(14.0 756.8 546.9)" stroke="#bdbdbd" stroke-width="1" />
<path d="M752.5 566.4 L752.6 563.4 L752.8 560.3 L753.1 557.1 L753.6 553.9 L754.2 550.7 L754.9 547.4 L755.8 544.2 L757.8 538.0 L759.0 535.1 L760.3 532.3 L761.7 529.6 L763.2 527.0 L764.7 524.7 L766.2 522.6 L767.8 520.7 L769.5 519.0 L771.1 517.6 L772.8 516.4 L774.4 515.5 L776.0 514.9 L777.6 514.5 L779.1 514.5 L780.6 514.7 L799.1 519.7 L800.5 520.2 L801.8 521.0 L803.0 522.0 L804.2 523.3 L805.2 524.9 L806.1 526.7 L806.9 528.7 L807.5 531.0 L808.1 533.4 L808.4 536.0 L808.7 538.8 L808.8 541.7 L808.7 544.7 L808.5 547.8 L808.2 551.0 L807.7 554.2 L807.1 557.4 L806.4 560.7 L805.5 563.9 L803.5 570.1 L802.3 573.0 L801.0 575.9 L799.6 578.6 L798.1 581.1 L796.6 583.4 L795.1 585.5 L793.5 587.4 L791.8 589.1 L790.2 590.5 L788.5 591.7 L786.9 592.6 L785.3 593.2 L783.7 593.6 L782.2 593.6 L780.7 593.4 L762.2 588.4 L760.8 587.9 L759.5 587.2 L758.3 586.1 L757.1 584.8 L756.1 583.2 L755.2 581.4 L754.4 579.4 L753.8 577.2 L753.2 574.7 L752.9 572.1 L752.6 569.3 Z" fill="url(#tread)" stroke="#3a3a3a" stroke-width="0.9" stroke-linejoin="round" />
<ellipse cx="789.9" cy="556.6" rx="17.0" ry="38.0" fill="#c9c9c9" transform="rotate(14.0 789.9 556.6)" stroke="#222" stroke-width="0.9" />
<ellipse cx="790.5" cy="556.6" rx="14.8" ry="35.0" fill="url(#spk)" transform="rotate(14.0 790.5 556.6)" stroke="#111" stroke-width="0.8" />
<ellipse cx="790.7" cy="556.6" rx="4.0" ry="9.0" fill="#3a3a3a" transform="rotate(14.0 790.7 556.6)" stroke="#bdbdbd" stroke-width="1" />
<path d="M786.4 576.1 L786.5 573.1 L786.7 569.9 L787.0 566.8 L787.5 563.6 L788.1 560.3 L788.8 557.1 L789.7 553.9 L790.7 550.7 L791.7 547.7 L792.9 544.7 L794.2 541.9 L795.6 539.2 L797.1 536.7 L798.6 534.3 L800.1 532.2 L801.7 530.3 L803.4 528.6 L805.0 527.2 L806.7 526.0 L808.3 525.1 L809.9 524.5 L811.5 524.2 L813.0 524.1 L814.5 524.3 L833.0 529.3 L834.4 529.8 L835.7 530.6 L836.9 531.6 L838.1 533.0 L839.1 534.5 L840.0 536.3 L840.8 538.4 L841.4 540.6 L842.0 543.0 L842.6 548.4 L842.7 551.3 L842.6 554.3 L842.4 557.5 L842.1 560.6 L841.6 563.8 L841.0 567.1 L840.3 570.3 L839.4 573.5 L838.4 576.7 L837.4 579.7 L836.2 582.7 L834.9 585.5 L833.5 588.2 L832.0 590.7 L830.5 593.1 L829.0 595.2 L827.4 597.1 L825.7 598.8 L824.1 600.2 L822.4 601.4 L820.8 602.3 L819.2 602.9 L817.6 603.2 L816.1 603.3 L814.6 603.1 L796.1 598.1 L794.7 597.6 L793.4 596.8 L792.2 595.8 L791.0 594.4 L790.0 592.9 L789.1 591.1 L788.3 589.0 L787.7 586.8 L787.1 584.4 L786.8 581.7 L786.5 579.0 Z" fill="url(#tread)" stroke="#3a3a3a" stroke-width="0.9" stroke-linejoin="round" />
<ellipse cx="823.8" cy="566.2" rx="17.0" ry="38.0" fill="#c9c9c9" transform="rotate(14.0 823.8 566.2)" stroke="#222" stroke-width="0.9" />
<ellipse cx="824.4" cy="566.2" rx="14.8" ry="35.0" fill="url(#spk)" transform="rotate(14.0 824.4 566.2)" stroke="#111" stroke-width="0.8" />
<ellipse cx="824.6" cy="566.2" rx="4.0" ry="9.0" fill="#3a3a3a" transform="rotate(14.0 824.6 566.2)" stroke="#bdbdbd" stroke-width="1" />
<path d="M820.3 585.7 L820.4 582.7 L820.6 579.6 L820.9 576.4 L821.4 573.2 L822.0 570.0 L822.7 566.7 L823.6 563.5 L825.6 557.3 L826.8 554.4 L828.1 551.5 L829.5 548.8 L831.0 546.3 L832.5 544.0 L834.0 541.9 L835.6 540.0 L837.3 538.3 L838.9 536.9 L840.6 535.7 L842.2 534.8 L843.8 534.2 L845.4 533.8 L846.9 533.8 L848.4 534.0 L866.9 539.0 L868.3 539.5 L869.6 540.2 L870.8 541.3 L872.0 542.6 L873.0 544.2 L873.9 546.0 L874.7 548.0 L875.3 550.2 L875.9 552.7 L876.2 555.3 L876.5 558.1 L876.6 561.0 L876.5 564.0 L876.3 567.1 L876.0 570.3 L875.5 573.5 L874.9 576.7 L874.2 580.0 L873.3 583.2 L871.3 589.4 L870.1 592.3 L868.8 595.1 L867.4 597.8 L865.9 600.4 L864.4 602.7 L862.9 604.8 L861.3 606.7 L859.6 608.4 L858.0 609.8 L856.3 611.0 L854.7 611.9 L853.1 612.5 L851.5 612.9 L850.0 612.9 L848.5 612.7 L830.0 607.7 L828.6 607.2 L827.3 606.4 L826.1 605.4 L824.9 604.1 L823.9 602.5 L823.0 600.7 L822.2 598.7 L821.6 596.4 L821.0 594.0 L820.7 591.4 L820.4 588.6 Z" fill="url(#tread)" stroke="#3a3a3a" stroke-width="0.9" stroke-linejoin="round" />
<ellipse cx="857.7" cy="575.8" rx="17.0" ry="38.0" fill="#c9c9c9" transform="rotate(14.0 857.7 575.8)" stroke="#222" stroke-width="0.9" />
<ellipse cx="858.3" cy="575.8" rx="14.8" ry="35.0" fill="url(#spk)" transform="rotate(14.0 858.3 575.8)" stroke="#111" stroke-width="0.8" />
<ellipse cx="858.5" cy="575.8" rx="4.0" ry="9.0" fill="#3a3a3a" transform="rotate(14.0 858.5 575.8)" stroke="#bdbdbd" stroke-width="1" />
<path d="M854.2 595.4 L854.3 592.3 L854.5 589.2 L854.8 586.1 L855.3 582.8 L855.9 579.6 L856.6 576.4 L857.5 573.2 L858.5 570.0 L859.5 567.0 L860.7 564.0 L862.0 561.2 L863.4 558.5 L864.9 556.0 L866.4 553.6 L867.9 551.5 L869.5 549.6 L871.2 547.9 L872.8 546.5 L874.5 545.3 L876.1 544.4 L877.7 543.8 L879.3 543.5 L880.8 543.4 L882.3 543.6 L900.8 548.6 L902.2 549.1 L903.5 549.9 L904.7 550.9 L905.9 552.2 L906.9 553.8 L907.8 555.6 L908.6 557.6 L909.2 559.9 L909.8 562.3 L910.1 564.9 L910.4 567.7 L910.5 570.6 L910.4 573.6 L910.2 576.7 L909.9 579.9 L909.4 583.1 L908.8 586.4 L908.1 589.6 L907.2 592.8 L905.2 599.0 L904.0 602.0 L902.7 604.8 L901.3 607.5 L899.8 610.0 L898.3 612.3 L896.8 614.5 L895.2 616.4 L893.5 618.0 L891.9 619.5 L890.2 620.6 L888.6 621.5 L887.0 622.2 L885.4 622.5 L883.9 622.6 L882.4 622.4 L863.9 617.4 L862.5 616.9 L861.2 616.1 L860.0 615.0 L858.8 613.7 L857.8 612.2 L856.9 610.4 L856.1 608.3 L855.5 606.1 L854.9 603.6 L854.6 601.0 L854.3 598.3 Z" fill="url(#tread)" stroke="#3a3a3a" stroke-width="0.9" stroke-linejoin="round" />
<ellipse cx="891.6" cy="585.5" rx="17.0" ry="38.0" fill="#c9c9c9" transform="rotate(14.0 891.6 585.5)" stroke="#222" stroke-width="0.9" />
<ellipse cx="892.2" cy="585.5" rx="14.8" ry="35.0" fill="url(#spk)" transform="rotate(14.0 892.2 585.5)" stroke="#111" stroke-width="0.8" />
<ellipse cx="892.4" cy="585.5" rx="4.0" ry="9.0" fill="#3a3a3a" transform="rotate(14.0 892.4 585.5)" stroke="#bdbdbd" stroke-width="1" />
<path d="M888.1 605.0 L888.2 602.0 L888.4 598.9 L888.7 595.7 L889.2 592.5 L889.8 589.2 L890.5 586.0 L891.4 582.8 L893.4 576.6 L894.6 573.6 L895.9 570.8 L897.3 568.1 L898.8 565.6 L900.3 563.3 L901.8 561.1 L903.4 559.2 L905.1 557.6 L906.7 556.1 L908.4 555.0 L910.0 554.1 L911.6 553.4 L913.2 553.1 L914.7 553.0 L916.2 553.2 L934.7 558.2 L936.1 558.7 L937.4 559.5 L938.6 560.6 L939.8 561.9 L940.8 563.4 L941.7 565.2 L942.5 567.3 L943.1 569.5 L943.7 572.0 L944.0 574.6 L944.3 577.3 L944.4 580.2 L944.3 583.3 L944.1 586.4 L943.8 589.5 L943.3 592.8 L942.7 596.0 L942.0 599.2 L941.1 602.4 L940.1 605.6 L939.1 608.6 L937.9 611.6 L936.6 614.4 L935.2 617.1 L933.7 619.6 L932.2 622.0 L930.7 624.1 L929.1 626.0 L927.4 627.7 L925.8 629.1 L924.1 630.3 L922.5 631.2 L920.9 631.8 L919.3 632.1 L917.8 632.2 L916.3 632.0 L897.8 627.0 L896.4 626.5 L895.1 625.7 L893.9 624.7 L892.7 623.4 L891.7 621.8 L890.8 620.0 L890.0 618.0 L889.4 615.7 L888.8 613.3 L888.5 610.7 L888.2 607.9 Z" fill="url(#tread)" stroke="#3a3a3a" stroke-width="0.9" stroke-linejoin="round" />
<ellipse cx="925.5" cy="595.1" rx="17.0" ry="38.0" fill="#c9c9c9" transform="rotate(14.0 925.5 595.1)" stroke="#222" stroke-width="0.9" />
<ellipse cx="926.1" cy="595.1" rx="14.8" ry="35.0" fill="url(#spk)" transform="rotate(14.0 926.1 595.1)" stroke="#111" stroke-width="0.8" />
<ellipse cx="926.3" cy="595.1" rx="4.0" ry="9.0" fill="#3a3a3a" transform="rotate(14.0 926.3 595.1)" stroke="#bdbdbd" stroke-width="1" />
<ellipse cx="936.0" cy="600.0" rx="10.0" ry="20.0" fill="#15736e" transform="rotate(14.0 936.0 600.0)" stroke="#031f1e" stroke-width="1" />
<ellipse cx="941.0" cy="601.0" rx="8.0" ry="16.0" fill="#0e4f4b" transform="rotate(14.0 941.0 601.0)" />
<ellipse cx="948.0" cy="603.0" rx="7.0" ry="13.0" fill="#111" transform="rotate(14.0 948.0 603.0)" />
<ellipse cx="951.5" cy="604.0" rx="4.0" ry="6.0" fill="#d8d8d8" transform="rotate(14.0 951.5 604.0)" stroke="#111" stroke-width="0.8" />
<defs>
<linearGradient id="g_flr" gradientUnits="userSpaceOnUse" x1="745" y1="776" x2="736" y2="811"><stop offset="0" stop-color="#26a9a0"/><stop offset="0.35" stop-color="#1f9c95"/><stop offset="1" stop-color="#168781"/></linearGradient>
<linearGradient id="g_fls" gradientUnits="userSpaceOnUse" x1="530" y1="770" x2="953" y2="890"><stop offset="0" stop-color="#126e69"/><stop offset="1" stop-color="#157772"/></linearGradient>
<linearGradient id="g_frr" gradientUnits="userSpaceOnUse" x1="1136" y1="729" x2="1156" y2="752"><stop offset="0" stop-color="#25aaa1"/><stop offset="0.4" stop-color="#3fcfc3"/><stop offset="1" stop-color="#1fa098"/></linearGradient>
<linearGradient id="g_bcr" gradientUnits="userSpaceOnUse" x1="955" y1="860" x2="1033" y2="850"><stop offset="0" stop-color="#1c968f"/><stop offset="0.7" stop-color="#38c5ba"/><stop offset="1" stop-color="#2db5ab"/></linearGradient>
<linearGradient id="g_bcf" gradientUnits="userSpaceOnUse" x1="953" y1="890" x2="1033" y2="885"><stop offset="0" stop-color="#147670"/><stop offset="1" stop-color="#1c9891"/></linearGradient>
<linearGradient id="g_lcr" gradientUnits="userSpaceOnUse" x1="530" y1="715" x2="502" y2="745"><stop offset="0" stop-color="#27a8a0"/><stop offset="1" stop-color="#178a84"/></linearGradient>
</defs>
<path d="M501.8 733.2 Q515 744 530.4 750 L953.1 872.7 L953.1 925.5 L529.4 804 Q521 800.5 513.6 795.2 Q501 785 499.8 771.6 L499.8 740 Z" fill="url(#g_fls)" />
<path d="M501.8 733.2 Q515 744 530.4 750 L530.4 804 Q521 800.5 513.6 795.2 Q501 785 499.8 771.6 L499.8 740 Z" fill="#116b66" />
<path d="M501.8 777.5 Q514 787 530.4 791.3 L953.1 916 L953.1 925.5 L529.4 804 Q521 800.5 513.6 795.2 Q504 787 501.8 777.5 Z" fill="#0e645f" />
<path d="M1033.4 862 L1278.2 651.4 L1286 642 L1286 676.6 Q1284 690 1276.6 698.7 L1033.4 912.9 Z" fill="#1c9a93" />
<path d="M1033.4 906.6 L1277.4 690 L1284.5 682 Q1282 692 1276.6 698.7 L1033.4 912.9 Z" fill="#15817b" />
<path d="M953.1 872.7 Q990.9 880 1033.4 862 L1033.4 912.9 Q1025 920 1014.5 925.5 Q1003 929.5 987.8 930.2 Q970 930.5 953.1 925.5 Z" fill="url(#g_bcf)" />
<path d="M953.1 916 Q992.5 921 1033.4 906.6 L1033.4 912.9 Q1025 920 1014.5 925.5 Q1003 929.5 987.8 930.2 Q970 930.5 953.1 925.5 Z" fill="#13786f" />
<path d="M584.5 636.7 L514.6 694.8 Q503 706 499.8 726.3 L501.8 733.2 Q515 744 530.4 750 L530.4 734.2 Q532 726 541.2 719.4 Q535 718 531.3 714.5 Q523 704 527.4 694.8 L583.5 649.5 Z" fill="url(#g_lcr)" />
<path d="M541.2 719.4 L700 763.8 L963.3 841.2 Q955 855 953.1 872.7 L530.4 750 L530.4 734.2 Q532 726 541.2 719.4 Z" fill="url(#g_flr)" />
<path d="M963.3 841.2 Q983 845.5 1002 840.4 Q1009 838 1014.5 834.9 Q1028 846 1033.4 862 Q990.9 880 953.1 872.7 Q955 855 963.3 841.2 Z" fill="url(#g_bcr)" />
<path d="M1014.5 834.9 L1256.9 623 Q1270.3 630.9 1278.2 651.4 L1033.4 862 Q1028 846 1014.5 834.9 Z" fill="url(#g_frr)" />
<path d="M1210.4 586 L1246.7 595.5 Q1257 598 1267.1 604.1 Q1273 608 1279.7 618.3 Q1285 627 1286 640 L1286 642 L1278.2 651.4 Q1270.3 630.9 1256.9 623 Q1262 615 1259.3 607.3 Q1254 601 1245 598.6 L1212 589.5 Z" fill="#27aaa1" />
<path d="M583.5 649.5 L527.4 694.8 Q523 704 531.3 714.5 Q535 718 541.2 719.4 L700 763.8 L963.3 841.2 Q983 845.5 1002 840.4 Q1009 838 1014.5 834.9 L1256.9 623 Q1262 615 1259.3 607.3 Q1254 601 1245 598.6 L1212 589.5 L1212.4 615.4 L1219.9 614.4 L980.7 821.5 L566.8 702.7 L596.3 677 L590 650 Z" fill="#24a89f" />
<path d="M583.5 649.5 L527.4 694.8 Q523 704 531.3 714.5 Q535 718 541.2 719.4 L700 763.8 L963.3 841.2 Q983 845.5 1002 840.4 Q1009 838 1014.5 834.9 L1256.9 623 Q1262 615 1259.3 607.3 Q1254 601 1245 598.6 L1212 589.5" fill="none" stroke="#0a3b39" stroke-width="1.15" stroke-linejoin="round" stroke-linecap="round" />
<path d="M596.3 677 L566.8 702.7 L980.7 821.5 L1219.9 614.4" fill="none" stroke="#0a3b39" stroke-width="1.15" stroke-linejoin="round" stroke-linecap="round" />
<path d="M501.8 733.2 Q515 744 530.4 750 L953.1 872.7 Q990.9 880 1033.4 862 L1278.2 651.4 L1286 642" fill="none" stroke="#0a3b39" stroke-width="1.15" stroke-linejoin="round" stroke-linecap="round" />
<path d="M501.8 777.5 Q514 787 530.4 791.3 L953.1 916 Q992.5 921 1033.4 906.6 L1277.4 690 L1284.5 682" fill="none" stroke="#0a3b39" stroke-width="1.15" stroke-linejoin="round" stroke-linecap="round" />
<path d="M541.2 719.4 Q532 726 530.4 734.2 L530.4 804" fill="none" stroke="#0a3b39" stroke-width="1.15" stroke-linejoin="round" stroke-linecap="round" />
<path d="M963.3 841.2 Q955 855 953.1 872.7 L953.1 925.5" fill="none" stroke="#0a3b39" stroke-width="1.15" stroke-linejoin="round" stroke-linecap="round" />
<path d="M1014.5 834.9 Q1028 846 1033.4 862 L1033.4 912.9" fill="none" stroke="#0a3b39" stroke-width="1.15" stroke-linejoin="round" stroke-linecap="round" />
<path d="M1256.9 623 Q1270.3 630.9 1278.2 651.4 L1277.4 697" fill="none" stroke="#0a3b39" stroke-width="1.15" stroke-linejoin="round" stroke-linecap="round" />
<path d="M514.6 694.8 L527.4 694.8" fill="none" stroke="#0a3b39" stroke-width="1.15" stroke-linejoin="round" stroke-linecap="round" />
<path d="M584.5 636.7 L514.6 694.8 Q503 706 499.8 726.3 L499.8 771.6 Q501 785 513.6 795.2 Q521 800.5 529.4 804 L953.1 925.5 Q970 930.5 987.8 930.2 Q1003 929.5 1014.5 925.5 Q1025 920 1033.4 912.9 L1276.6 698.7 Q1284 690 1286 676.6 L1286 640 Q1285 627 1279.7 618.3 Q1273 608 1267.1 604.1 Q1257 598 1246.7 595.5 L1210.4 586" fill="none" stroke="#0b2f2d" stroke-width="1.4" stroke-linejoin="round" stroke-linecap="round" />
<text transform="matrix(1.03 0.299 0.06 1 563.5 802.6)" x="0" y="0" font-family="'Liberation Sans',sans-serif" font-weight="700" font-size="61" fill="#929292" stroke="#0b3330" stroke-width="2.2" stroke-linejoin="round" paint-order="stroke">1421</text>
<text transform="matrix(0.6 -0.486 0 1 1052.3 882.6)" x="0" y="0" font-family="'Liberation Sans',sans-serif" font-weight="700" font-size="62" fill="#bcbcbc" stroke="#0b3330" stroke-width="2.6" stroke-linejoin="round" paint-order="stroke">1421</text>
</svg>
<svg class="i" style="left:0.00px;top:0.00px;" width="1567" height="1016" viewBox="0 0 1567 1016"><g fill="#e3e7ea">
<path d="M1460.2 113 L1468.5 127 H1452 Z"/>
<path d="M1460.2 301 L1468.5 288 H1452 Z"/>
<path d="M1368.5 207.2 L1380 197.5 V217 Z"/>
<path d="M1553.5 207.2 L1542 197.5 V217 Z"/>
<path d="M1433.5 124.5 C1418 129 1405 137 1396.5 145.5 L1393.5 141.5 L1394 156 L1408.5 153.5 L1403 150 C1411 142 1422 135.5 1435.5 131 Z"/>
<path d="M1487 124.5 C1502.5 129 1515.5 137 1524 145.5 L1527 141.5 L1526.5 156 L1512 153.5 L1517.5 150 C1509.5 142 1498.5 135.5 1485 131 Z"/>
<path d="M1457.5 154.5 Q1462 152.5 1467 154.5 L1503 171 Q1508.5 174 1508.5 180 L1508.5 226 Q1508 231 1504 234.5 L1477 257.5 Q1471.5 261 1465 259.5 L1418 247.5 Q1412.5 245.5 1412.3 240 L1413.2 185 Q1413.5 180 1418 177 Z"/>
</g>
<g fill="#fff">
<path d="M1421.5 198.5 Q1419.5 198 1419.3 200.5 L1419.6 236 Q1419.8 239.5 1423 240.2 L1461 247.2 Q1465 247.8 1465 244 L1464.6 213.5 Q1464.5 210.5 1461.5 209.6 Z"/>
<path d="M1431.5 174.5 L1456 161.6 Q1459 160.2 1462 161.4 L1489 171.2 Q1492.5 172.8 1489.6 175 L1471 190 Q1468.5 191.8 1465.5 191 L1432 180.2 Q1428 178.6 1431.5 174.5 Z"/>
<path d="M1482 199.5 L1501.5 188.4 Q1504.5 186.8 1504.6 190 L1505.6 223 Q1505.6 226 1503.5 227.8 L1482.5 244.5 Q1479.8 246.4 1479.7 243 L1479.6 203.5 Q1479.6 200.8 1482 199.5 Z"/>
<circle cx="1470.6" cy="202" r="8"/>
<ellipse cx="1418.5" cy="186.5" rx="4" ry="6"/>
<ellipse cx="1471" cy="254.5" rx="7" ry="3.2" transform="rotate(-14 1471 254.5)"/>
<path d="M1447.5 190 L1449.5 190.6 V204 L1447.5 203.4 Z"/>
</g>
<path d="M1408.6 184 V246.8" stroke="#3d3ccd" stroke-width="1.7" fill="none"/>
<path d="M1408.6 246.8 L1471.3 265.4" stroke="#dc4a4a" stroke-width="1.5" fill="none"/>
<path d="M1408.6 246.8 L1445.1 215.8" stroke="#5cb85c" stroke-width="1.2" fill="none" opacity="0.6"/>
</svg>
<div class="t" style="left:1402.60px;top:162.70px;font-size:17.50px;line-height:21.00px;color:#4a3fd0;font-weight:700;">Z</div>
<div class="t" style="left:1476.60px;top:259.00px;font-size:17.50px;line-height:21.00px;color:#dc4646;font-weight:700;">X</div>
<div class="t" style="left:1446.00px;top:201.70px;font-size:13.50px;line-height:16.20px;color:#a4d8a6;">Y</div>
<div class="t" style="left:1425.5px;top:209.5px;font-size:14.5px;line-height:18px;color:#4a4a4a;transform:matrix(1,0.29,0.03,1,0,0);transform-origin:0 0;letter-spacing:-0.2px;">Front</div>
<div class="t" style="left:1452.5px;top:166px;font-size:11px;line-height:13px;color:#666;font-style:italic;transform:matrix(0.98,0.36,-0.5,0.62,0,0);transform-origin:0 0;">Top</div>
<div class="t" style="left:1483px;top:219.5px;font-size:11.5px;line-height:13px;color:#666;transform:matrix(0.68,-0.62,0,1,0,0);transform-origin:0 0;">Right</div>
<svg class="i" style="left:1505.00px;top:279.00px;" width="24" height="24" viewBox="0 0 24 24"><path d="M1.5 6.5 L12 2 L22.5 6 V18 L12 23 L1.5 18 Z" fill="#9b9b9b" stroke="#222" stroke-width="1.2" stroke-linejoin="round"/>
<path d="M1.5 6.5 L12 2 L22.5 6 L12 10.5 Z" fill="#fff" stroke="#222" stroke-width="1.1" stroke-linejoin="round"/><path d="M12 10.5 V23 L22.5 18 V6 Z" fill="#e6e6e6" stroke="#222" stroke-width="1.1" stroke-linejoin="round"/></svg>
<svg class="i" style="left:1538.00px;top:287.00px;" width="11" height="7" viewBox="0 0 11 7"><path d="M0.5 0.8 H10 L5.2 6 Z" fill="#222"/></svg>
<div class="b" style="left:1533.50px;top:378.00px;width:40.00px;height:249.00px;background:#fff;border:1px solid #cfcfcf;"></div>
<div class="b" style="left:1534.00px;top:419.10px;width:34.00px;height:1.00px;background:#d4d4d4;"></div>
<div class="b" style="left:1534.00px;top:460.00px;width:34.00px;height:1.00px;background:#d4d4d4;"></div>
<div class="b" style="left:1534.00px;top:501.80px;width:34.00px;height:1.00px;background:#d4d4d4;"></div>
<div class="b" style="left:1534.00px;top:543.00px;width:34.00px;height:1.00px;background:#d4d4d4;"></div>
<div class="b" style="left:1534.00px;top:583.90px;width:34.00px;height:1.00px;background:#d4d4d4;"></div>
<div class="b" style="left:1533.50px;top:639.50px;width:40.00px;height:42.50px;background:#fff;border:1px solid #cfcfcf;"></div>
<svg class="i" style="left:1541.00px;top:388.00px;" width="26" height="24" viewBox="0 0 26 24"><rect x="1.2" y="1.2" width="24" height="21" rx="4" fill="#fff" stroke="#2f2f2f" stroke-width="1.6"/><g stroke="#2f2f2f" stroke-width="2"><path d="M5 6.5 H18 M8 10.5 H21 M8 14.5 H21 M8 18.3 H21"/></g></svg>
<svg class="i" style="left:1541.00px;top:428.00px;" width="26" height="26" viewBox="0 0 26 26"><path d="M6 10 L16 6 L25.5 10.5 V20 L15.5 24.5 L6 20 Z" fill="#fff" stroke="#2f2f2f" stroke-width="1.4" stroke-linejoin="round"/><path d="M6 10 L15.5 14 L25.5 10.5 M15.5 14 V24.5" fill="none" stroke="#2f2f2f" stroke-width="1.3"/>
<rect x="0.5" y="0.5" width="12" height="10" fill="#2f62c8"/><path d="M0.5 4 H12.5 M0.5 7.3 H12.5 M4.5 0.5 V10.5 M8.5 0.5 V10.5" stroke="#c5d4f2" stroke-width="0.8"/></svg>
<svg class="i" style="left:1541.00px;top:470.00px;" width="26" height="26" viewBox="0 0 26 26"><path d="M2 3 L4 1.5 H8.5 V6.5 L6.5 8 H2 Z" fill="#9b9b9b" stroke="#444" stroke-width="0.9"/>
<path d="M10 14 L13 11.5 H18 V15 H25 V21 L22 23.5 H10 Z" fill="#fff" stroke="#2f2f2f" stroke-width="1.3" stroke-linejoin="round"/><path d="M10 14 H15 V17.5 H22 V23.5 M15 14 L18 11.5 M22 17.5 L25 15" fill="none" stroke="#2f2f2f" stroke-width="1.1"/>
<path d="M5 10.5 H10.5" stroke="#2f62c8" stroke-width="1.6"/><circle cx="5" cy="10.5" r="1.3" fill="#2f62c8"/><circle cx="10.5" cy="10.5" r="1.3" fill="#2f62c8"/></svg>
<svg class="i" style="left:1541.00px;top:511.00px;" width="27" height="26" viewBox="0 0 27 26"><rect x="1" y="15.5" width="24" height="8.5" fill="#fff" stroke="#2f2f2f" stroke-width="1.5"/><rect x="14" y="2" width="10.5" height="17" rx="1.5" fill="none" stroke="#2f62c8" stroke-width="1.4" stroke-dasharray="2.4 1.6"/><circle cx="19.5" cy="19.5" r="4" fill="#fff" stroke="#2f62c8" stroke-width="1.4"/><circle cx="19.5" cy="19.5" r="1.4" fill="#2f2f2f"/></svg>
<svg class="i" style="left:1542.00px;top:552.00px;" width="24" height="24" viewBox="0 0 24 24"><path d="M12 1 L22 8 L18 21 H6 L2 8 Z" fill="#9dc3ea"/><path d="M12 1 L12 11 L2 8 Z" fill="#bcd9f3"/><path d="M12 1 L22 8 L12 11 Z" fill="#e8f1fb"/><path d="M2 8 L12 11 L6 21 Z" fill="#1b56b8"/><path d="M12 11 L18 21 H6 Z" fill="#2f6fd0"/><path d="M22 8 L18 21 L12 11 Z" fill="#a9a9a9"/><path d="M12 1 L22 8 L18 21 H6 L2 8 Z M12 1 V11 M2 8 L12 11 L22 8 M6 21 L12 11 L18 21" fill="none" stroke="#fff" stroke-width="0.9"/></svg>
<svg class="i" style="left:1540.00px;top:592.00px;" width="8" height="8" viewBox="0 0 8 8"><rect x="0" y="0" width="11" height="11" fill="#fff"/></svg>
<svg class="i" style="left:1540.00px;top:593.00px;" width="12" height="11" viewBox="0 0 12 11"><rect x="0.5" y="0.5" width="11" height="10" fill="#4a4a4a"/><path d="M0.5 4 H11.5 M0.5 7.3 H11.5 M4.2 0.5 V10.5 M7.8 0.5 V10.5" stroke="#d9d9d9" stroke-width="0.8"/></svg>
<div class="t" style="left:1540px;top:591px;font-size:27px;line-height:30px;color:#2a2a2a;font-family:'Liberation Serif',serif;font-style:italic;font-weight:700;letter-spacing:-2px;">(x)</div>
<div class="b" style="left:1538.50px;top:645.50px;width:30.00px;height:30.50px;background:#e3e3e3;border-radius:4px;"></div>
<div class="b" style="left:1541.50px;top:648.50px;width:27.00px;height:24.50px;background:#1550d8;border:1px solid #0b2e7c;"></div>
<div class="t" style="left:1544px;top:649px;font-size:21px;line-height:24px;color:#b9c6e6;font-family:'Liberation Serif',serif;letter-spacing:-0.5px;">MI</div>
<svg class="i" style="left:1450.00px;top:958.00px;" width="23" height="19" viewBox="0 0 23 19"><path d="M1.5 11.5 H11 V17 H1.5 Z" fill="#fff" stroke="#2f2f2f" stroke-width="1.4"/><path d="M4 14.5 V17 M6.5 14.5 V17 M9 14.5 V17" stroke="#2f2f2f" stroke-width="0.9"/>
<path d="M9 6.5 V13 A6.2 3.6 0 0 0 21.5 13 V6.5" fill="#fff" stroke="#2f2f2f" stroke-width="1.5"/><ellipse cx="15.2" cy="6.5" rx="6.2" ry="3.8" fill="#fff" stroke="#2f2f2f" stroke-width="1.5"/><ellipse cx="15.2" cy="6.5" rx="3" ry="1.6" fill="none" stroke="#2f2f2f" stroke-width="1.1"/></svg>
<svg class="i" style="left:1491.00px;top:958.00px;" width="27" height="19" viewBox="0 0 27 19"><path d="M1.5 17.5 V14 A12 12.5 0 0 1 25.5 14 V17.5 Z" fill="#fff" stroke="#2f2f2f" stroke-width="1.6" stroke-linejoin="round"/><path d="M7 15.5 A6.5 7 0 0 1 20 15.5" fill="none" stroke="#2f2f2f" stroke-width="2.6"/><path d="M4 13.5 H6 M5.5 8.5 L7 9.5 M9 4.8 L10 6.4 M13.5 3.2 V5.2 M18 4.8 L17 6.4 M21.5 8.5 L20 9.5 M23 13.5 H21" stroke="#2f2f2f" stroke-width="0.9"/></svg>
<svg class="i" style="left:1539.00px;top:957.00px;" width="20" height="20" viewBox="0 0 20 20"><path d="M1 18.5 H19" stroke="#2f2f2f" stroke-width="2.2"/><path d="M10 1.5 V15.5 M6.5 15.5 H13.5 M2.5 3 H17.5" stroke="#2f2f2f" stroke-width="1.5" fill="none"/><path d="M4.5 3.5 L1.8 11.5 H7.2 Z M15.5 3.5 L12.8 11.5 H18.2 Z" fill="#fff" stroke="#2f2f2f" stroke-width="1.2" stroke-linejoin="round"/><path d="M1.8 11.5 H7.2 M12.8 11.5 H18.2" stroke="#2f2f2f" stroke-width="2"/></svg>
</div></body></html>
